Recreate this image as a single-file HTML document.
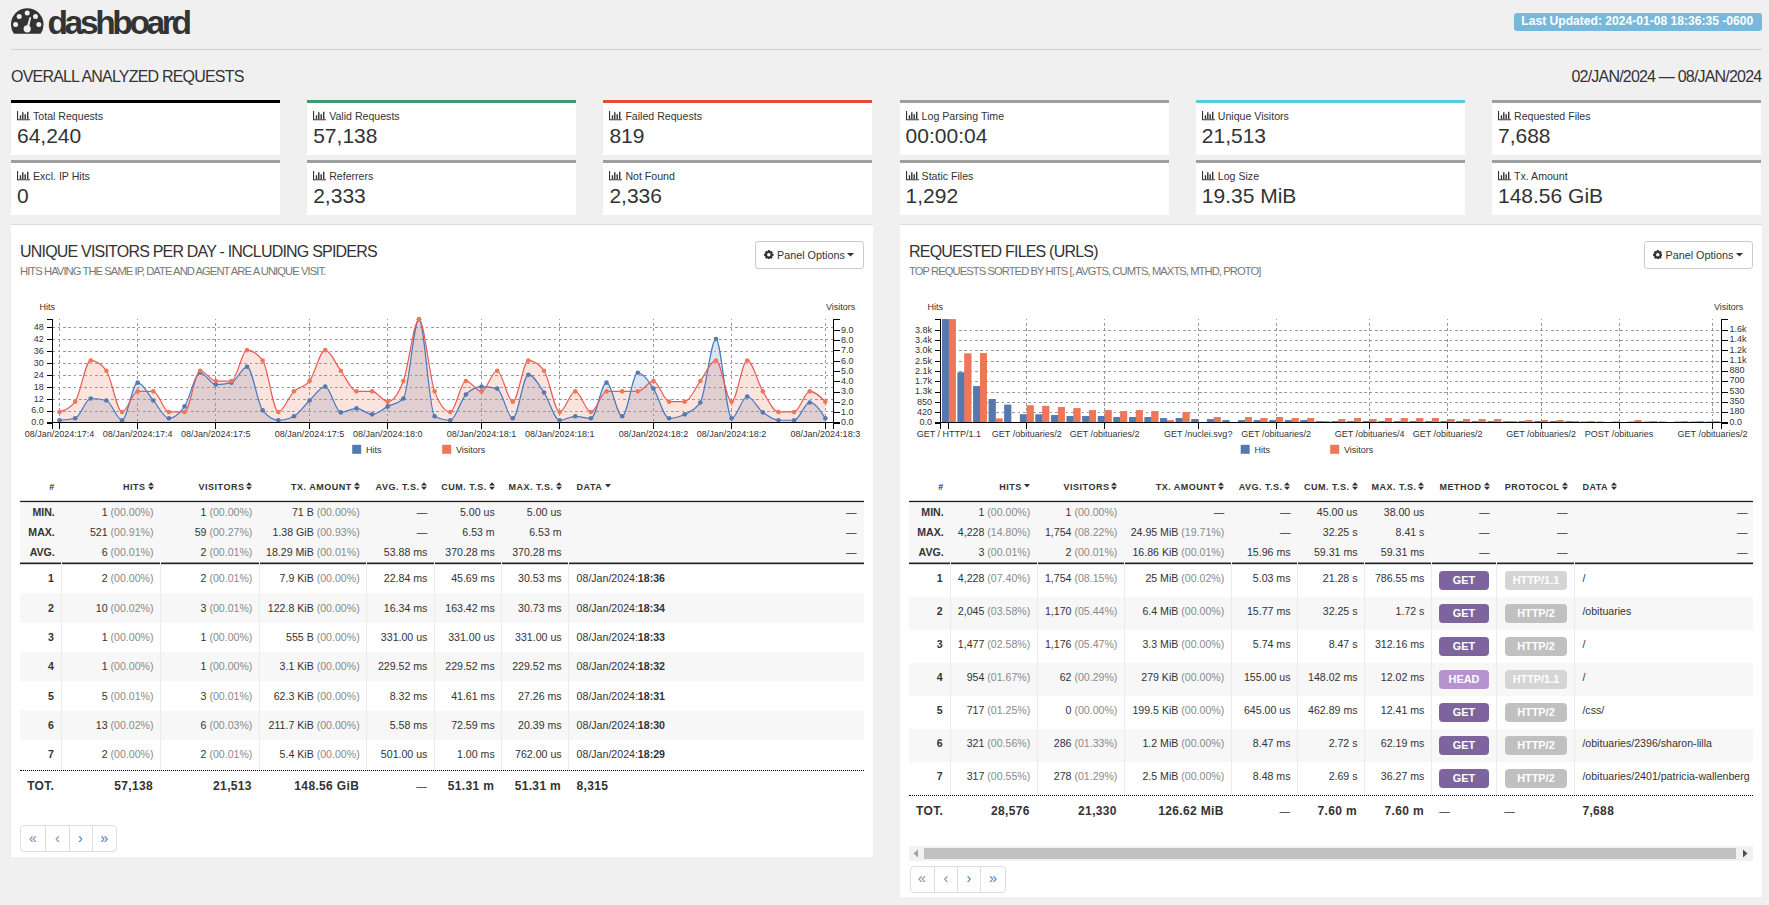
<!DOCTYPE html>
<html><head><meta charset="utf-8"><title>dashboard</title>
<style>
html,body{margin:0;padding:0;}
body{width:1769px;height:905px;overflow:hidden;position:relative;background:#f0f0f0;font-family:"Liberation Sans", sans-serif;color:#333;}
.pc{color:#8a8a8a;}
</style></head><body>

<svg style="position:absolute;left:11px;top:8px" width="33" height="27" viewBox="0 0 33 27">
<path fill="#333" d="M2.92,25.8 A16.25,16.25 0 1 1 29.58,25.8 Z"/>
<circle cx="16.2" cy="4.9" r="2.5" fill="#f0f0f0"/>
<circle cx="8.2" cy="8.6" r="2.5" fill="#f0f0f0"/>
<circle cx="24.5" cy="8.6" r="2.5" fill="#f0f0f0"/>
<circle cx="4.6" cy="16.5" r="2.5" fill="#f0f0f0"/>
<circle cx="27.8" cy="16.5" r="2.5" fill="#f0f0f0"/>
<circle cx="16.2" cy="20.8" r="3.6" fill="#f0f0f0"/>
<path d="M15.3,20.5 L18.6,9.0 L20.2,9.4 L17.6,21.0 Z" fill="#f0f0f0"/>
</svg>
<div style="position:absolute;left:47.5px;top:3px;font-size:33.6px;line-height:40px;color:#333;font-weight:bold;letter-spacing:-3.4px;white-space:nowrap;">dashboard</div>
<div style="position:absolute;left:11px;top:49px;width:1751px;height:1px;background:#d0d0d0;"></div>
<div style="position:absolute;left:1514px;top:13px;width:248px;height:18px;background:#76b9dc;border-radius:3px;"></div>
<div style="position:absolute;left:1521.3px;top:1px;font-size:12.1px;line-height:40px;color:#fff;font-weight:bold;letter-spacing:0px;white-space:nowrap;">Last Updated: 2024-01-08 18:36:35 -0600</div>
<div style="position:absolute;left:11px;top:57px;font-size:16px;line-height:40px;color:#333;font-weight:normal;letter-spacing:-0.8px;white-space:nowrap;">OVERALL ANALYZED REQUESTS</div>
<div style="position:absolute;right:7.599999999999909px;top:57px;font-size:16px;line-height:40px;color:#333;font-weight:normal;letter-spacing:-0.8px;white-space:nowrap;">02/JAN/2024 &mdash; 08/JAN/2024</div>
<div style="position:absolute;left:11.0px;top:100px;width:269px;height:52px;background:#fff;border-top:3px solid #000;"></div>
<svg style="position:absolute;left:17.0px;top:110.8px" width="14" height="10" viewBox="0 0 14 10">
<path fill="#333" d="M0,0 H1.1 V8.2 H13 V9.3 H0 Z M2.8,4.2 H4.2 V8 H2.8 Z M5.1,1.2 H6.5 V8 H5.1 Z M7.5,3.2 H8.9 V8 H7.5 Z M10,0.7 H11.4 V8 H10 Z"/></svg>
<div style="position:absolute;left:33.0px;top:96px;font-size:10.6px;line-height:40px;color:#333;font-weight:normal;letter-spacing:0px;white-space:nowrap;">Total Requests</div>
<div style="position:absolute;left:17.0px;top:116px;font-size:21px;line-height:40px;color:#333;font-weight:normal;letter-spacing:0px;white-space:nowrap;">64,240</div>
<div style="position:absolute;left:307.2px;top:100px;width:269px;height:52px;background:#fff;border-top:3px solid #3d9970;"></div>
<svg style="position:absolute;left:313.2px;top:110.8px" width="14" height="10" viewBox="0 0 14 10">
<path fill="#333" d="M0,0 H1.1 V8.2 H13 V9.3 H0 Z M2.8,4.2 H4.2 V8 H2.8 Z M5.1,1.2 H6.5 V8 H5.1 Z M7.5,3.2 H8.9 V8 H7.5 Z M10,0.7 H11.4 V8 H10 Z"/></svg>
<div style="position:absolute;left:329.2px;top:96px;font-size:10.6px;line-height:40px;color:#333;font-weight:normal;letter-spacing:0px;white-space:nowrap;">Valid Requests</div>
<div style="position:absolute;left:313.2px;top:116px;font-size:21px;line-height:40px;color:#333;font-weight:normal;letter-spacing:0px;white-space:nowrap;">57,138</div>
<div style="position:absolute;left:603.4px;top:100px;width:269px;height:52px;background:#fff;border-top:3px solid #e9473c;"></div>
<svg style="position:absolute;left:609.4px;top:110.8px" width="14" height="10" viewBox="0 0 14 10">
<path fill="#333" d="M0,0 H1.1 V8.2 H13 V9.3 H0 Z M2.8,4.2 H4.2 V8 H2.8 Z M5.1,1.2 H6.5 V8 H5.1 Z M7.5,3.2 H8.9 V8 H7.5 Z M10,0.7 H11.4 V8 H10 Z"/></svg>
<div style="position:absolute;left:625.4px;top:96px;font-size:10.6px;line-height:40px;color:#333;font-weight:normal;letter-spacing:0px;white-space:nowrap;">Failed Requests</div>
<div style="position:absolute;left:609.4px;top:116px;font-size:21px;line-height:40px;color:#333;font-weight:normal;letter-spacing:0px;white-space:nowrap;">819</div>
<div style="position:absolute;left:899.6px;top:100px;width:269px;height:52px;background:#fff;border-top:3px solid #9e9e9e;"></div>
<svg style="position:absolute;left:905.5999999999999px;top:110.8px" width="14" height="10" viewBox="0 0 14 10">
<path fill="#333" d="M0,0 H1.1 V8.2 H13 V9.3 H0 Z M2.8,4.2 H4.2 V8 H2.8 Z M5.1,1.2 H6.5 V8 H5.1 Z M7.5,3.2 H8.9 V8 H7.5 Z M10,0.7 H11.4 V8 H10 Z"/></svg>
<div style="position:absolute;left:921.5999999999999px;top:96px;font-size:10.6px;line-height:40px;color:#333;font-weight:normal;letter-spacing:0px;white-space:nowrap;">Log Parsing Time</div>
<div style="position:absolute;left:905.5999999999999px;top:116px;font-size:21px;line-height:40px;color:#333;font-weight:normal;letter-spacing:0px;white-space:nowrap;">00:00:04</div>
<div style="position:absolute;left:1195.8px;top:100px;width:269px;height:52px;background:#fff;border-top:3px solid #56ccde;"></div>
<svg style="position:absolute;left:1201.8px;top:110.8px" width="14" height="10" viewBox="0 0 14 10">
<path fill="#333" d="M0,0 H1.1 V8.2 H13 V9.3 H0 Z M2.8,4.2 H4.2 V8 H2.8 Z M5.1,1.2 H6.5 V8 H5.1 Z M7.5,3.2 H8.9 V8 H7.5 Z M10,0.7 H11.4 V8 H10 Z"/></svg>
<div style="position:absolute;left:1217.8px;top:96px;font-size:10.6px;line-height:40px;color:#333;font-weight:normal;letter-spacing:0px;white-space:nowrap;">Unique Visitors</div>
<div style="position:absolute;left:1201.8px;top:116px;font-size:21px;line-height:40px;color:#333;font-weight:normal;letter-spacing:0px;white-space:nowrap;">21,513</div>
<div style="position:absolute;left:1492.0px;top:100px;width:269px;height:52px;background:#fff;border-top:3px solid #9e9e9e;"></div>
<svg style="position:absolute;left:1498.0px;top:110.8px" width="14" height="10" viewBox="0 0 14 10">
<path fill="#333" d="M0,0 H1.1 V8.2 H13 V9.3 H0 Z M2.8,4.2 H4.2 V8 H2.8 Z M5.1,1.2 H6.5 V8 H5.1 Z M7.5,3.2 H8.9 V8 H7.5 Z M10,0.7 H11.4 V8 H10 Z"/></svg>
<div style="position:absolute;left:1514.0px;top:96px;font-size:10.6px;line-height:40px;color:#333;font-weight:normal;letter-spacing:0px;white-space:nowrap;">Requested Files</div>
<div style="position:absolute;left:1498.0px;top:116px;font-size:21px;line-height:40px;color:#333;font-weight:normal;letter-spacing:0px;white-space:nowrap;">7,688</div>
<div style="position:absolute;left:11.0px;top:160px;width:269px;height:52px;background:#fff;border-top:3px solid #9e9e9e;"></div>
<svg style="position:absolute;left:17.0px;top:170.8px" width="14" height="10" viewBox="0 0 14 10">
<path fill="#333" d="M0,0 H1.1 V8.2 H13 V9.3 H0 Z M2.8,4.2 H4.2 V8 H2.8 Z M5.1,1.2 H6.5 V8 H5.1 Z M7.5,3.2 H8.9 V8 H7.5 Z M10,0.7 H11.4 V8 H10 Z"/></svg>
<div style="position:absolute;left:33.0px;top:156px;font-size:10.6px;line-height:40px;color:#333;font-weight:normal;letter-spacing:0px;white-space:nowrap;">Excl. IP Hits</div>
<div style="position:absolute;left:17.0px;top:176px;font-size:21px;line-height:40px;color:#333;font-weight:normal;letter-spacing:0px;white-space:nowrap;">0</div>
<div style="position:absolute;left:307.2px;top:160px;width:269px;height:52px;background:#fff;border-top:3px solid #9e9e9e;"></div>
<svg style="position:absolute;left:313.2px;top:170.8px" width="14" height="10" viewBox="0 0 14 10">
<path fill="#333" d="M0,0 H1.1 V8.2 H13 V9.3 H0 Z M2.8,4.2 H4.2 V8 H2.8 Z M5.1,1.2 H6.5 V8 H5.1 Z M7.5,3.2 H8.9 V8 H7.5 Z M10,0.7 H11.4 V8 H10 Z"/></svg>
<div style="position:absolute;left:329.2px;top:156px;font-size:10.6px;line-height:40px;color:#333;font-weight:normal;letter-spacing:0px;white-space:nowrap;">Referrers</div>
<div style="position:absolute;left:313.2px;top:176px;font-size:21px;line-height:40px;color:#333;font-weight:normal;letter-spacing:0px;white-space:nowrap;">2,333</div>
<div style="position:absolute;left:603.4px;top:160px;width:269px;height:52px;background:#fff;border-top:3px solid #9e9e9e;"></div>
<svg style="position:absolute;left:609.4px;top:170.8px" width="14" height="10" viewBox="0 0 14 10">
<path fill="#333" d="M0,0 H1.1 V8.2 H13 V9.3 H0 Z M2.8,4.2 H4.2 V8 H2.8 Z M5.1,1.2 H6.5 V8 H5.1 Z M7.5,3.2 H8.9 V8 H7.5 Z M10,0.7 H11.4 V8 H10 Z"/></svg>
<div style="position:absolute;left:625.4px;top:156px;font-size:10.6px;line-height:40px;color:#333;font-weight:normal;letter-spacing:0px;white-space:nowrap;">Not Found</div>
<div style="position:absolute;left:609.4px;top:176px;font-size:21px;line-height:40px;color:#333;font-weight:normal;letter-spacing:0px;white-space:nowrap;">2,336</div>
<div style="position:absolute;left:899.6px;top:160px;width:269px;height:52px;background:#fff;border-top:3px solid #9e9e9e;"></div>
<svg style="position:absolute;left:905.5999999999999px;top:170.8px" width="14" height="10" viewBox="0 0 14 10">
<path fill="#333" d="M0,0 H1.1 V8.2 H13 V9.3 H0 Z M2.8,4.2 H4.2 V8 H2.8 Z M5.1,1.2 H6.5 V8 H5.1 Z M7.5,3.2 H8.9 V8 H7.5 Z M10,0.7 H11.4 V8 H10 Z"/></svg>
<div style="position:absolute;left:921.5999999999999px;top:156px;font-size:10.6px;line-height:40px;color:#333;font-weight:normal;letter-spacing:0px;white-space:nowrap;">Static Files</div>
<div style="position:absolute;left:905.5999999999999px;top:176px;font-size:21px;line-height:40px;color:#333;font-weight:normal;letter-spacing:0px;white-space:nowrap;">1,292</div>
<div style="position:absolute;left:1195.8px;top:160px;width:269px;height:52px;background:#fff;border-top:3px solid #9e9e9e;"></div>
<svg style="position:absolute;left:1201.8px;top:170.8px" width="14" height="10" viewBox="0 0 14 10">
<path fill="#333" d="M0,0 H1.1 V8.2 H13 V9.3 H0 Z M2.8,4.2 H4.2 V8 H2.8 Z M5.1,1.2 H6.5 V8 H5.1 Z M7.5,3.2 H8.9 V8 H7.5 Z M10,0.7 H11.4 V8 H10 Z"/></svg>
<div style="position:absolute;left:1217.8px;top:156px;font-size:10.6px;line-height:40px;color:#333;font-weight:normal;letter-spacing:0px;white-space:nowrap;">Log Size</div>
<div style="position:absolute;left:1201.8px;top:176px;font-size:21px;line-height:40px;color:#333;font-weight:normal;letter-spacing:0px;white-space:nowrap;">19.35 MiB</div>
<div style="position:absolute;left:1492.0px;top:160px;width:269px;height:52px;background:#fff;border-top:3px solid #9e9e9e;"></div>
<svg style="position:absolute;left:1498.0px;top:170.8px" width="14" height="10" viewBox="0 0 14 10">
<path fill="#333" d="M0,0 H1.1 V8.2 H13 V9.3 H0 Z M2.8,4.2 H4.2 V8 H2.8 Z M5.1,1.2 H6.5 V8 H5.1 Z M7.5,3.2 H8.9 V8 H7.5 Z M10,0.7 H11.4 V8 H10 Z"/></svg>
<div style="position:absolute;left:1514.0px;top:156px;font-size:10.6px;line-height:40px;color:#333;font-weight:normal;letter-spacing:0px;white-space:nowrap;">Tx. Amount</div>
<div style="position:absolute;left:1498.0px;top:176px;font-size:21px;line-height:40px;color:#333;font-weight:normal;letter-spacing:0px;white-space:nowrap;">148.56 GiB</div>
<div style="position:absolute;left:11px;top:224px;width:862px;height:633px;background:#fff;border-top:1px solid #ddd;box-sizing:border-box;"></div>
<div style="position:absolute;left:900px;top:224px;width:862px;height:673px;background:#fff;border-top:1px solid #ddd;box-sizing:border-box;"></div>
<div style="position:absolute;left:20px;top:232px;font-size:16px;line-height:40px;color:#333;font-weight:normal;letter-spacing:-0.8px;white-space:nowrap;">UNIQUE VISITORS PER DAY - INCLUDING SPIDERS</div>
<div style="position:absolute;left:20px;top:251px;font-size:11.2px;line-height:40px;color:#777;font-weight:normal;letter-spacing:-0.92px;white-space:nowrap;">HITS HAVING THE SAME IP, DATE AND AGENT ARE A UNIQUE VISIT.</div>
<div style="position:absolute;left:909px;top:232px;font-size:16px;line-height:40px;color:#333;font-weight:normal;letter-spacing:-0.8px;white-space:nowrap;">REQUESTED FILES (URLS)</div>
<div style="position:absolute;left:909px;top:251px;font-size:11.2px;line-height:40px;color:#777;font-weight:normal;letter-spacing:-0.92px;white-space:nowrap;">TOP REQUESTS SORTED BY HITS [, AVGTS, CUMTS, MAXTS, MTHD, PROTO]</div>
<div style="position:absolute;left:755px;top:241px;width:109px;height:28px;box-sizing:border-box;border:1px solid #ccc;border-radius:3px;background:#fff;"></div>
<svg style="position:absolute;left:764px;top:249.6px" width="9.6" height="9.6" viewBox="0 0 10 10"><path fill="#333" fill-rule="evenodd" d="M4,0 H6 L6.3,1.6 L7.6,0.9 L9.1,2.4 L8.4,3.7 L10,4 V6 L8.4,6.3 L9.1,7.6 L7.6,9.1 L6.3,8.4 L6,10 H4 L3.7,8.4 L2.4,9.1 L0.9,7.6 L1.6,6.3 L0,6 V4 L1.6,3.7 L0.9,2.4 L2.4,0.9 L3.7,1.6 Z M5,3.2 A1.8,1.8 0 1 0 5,6.8 A1.8,1.8 0 1 0 5,3.2 Z"/></svg>
<div style="position:absolute;left:777px;top:235px;font-size:10.8px;line-height:40px;color:#333;font-weight:normal;letter-spacing:0px;white-space:nowrap;">Panel Options</div>
<svg style="position:absolute;left:847px;top:252.6px" width="7" height="4" viewBox="0 0 7 4"><path fill="#333" d="M0,0 H7 L3.5,3.6 Z"/></svg>
<div style="position:absolute;left:1643.5px;top:241px;width:109px;height:28px;box-sizing:border-box;border:1px solid #ccc;border-radius:3px;background:#fff;"></div>
<svg style="position:absolute;left:1652.5px;top:249.6px" width="9.6" height="9.6" viewBox="0 0 10 10"><path fill="#333" fill-rule="evenodd" d="M4,0 H6 L6.3,1.6 L7.6,0.9 L9.1,2.4 L8.4,3.7 L10,4 V6 L8.4,6.3 L9.1,7.6 L7.6,9.1 L6.3,8.4 L6,10 H4 L3.7,8.4 L2.4,9.1 L0.9,7.6 L1.6,6.3 L0,6 V4 L1.6,3.7 L0.9,2.4 L2.4,0.9 L3.7,1.6 Z M5,3.2 A1.8,1.8 0 1 0 5,6.8 A1.8,1.8 0 1 0 5,3.2 Z"/></svg>
<div style="position:absolute;left:1665.5px;top:235px;font-size:10.8px;line-height:40px;color:#333;font-weight:normal;letter-spacing:0px;white-space:nowrap;">Panel Options</div>
<svg style="position:absolute;left:1735.5px;top:252.6px" width="7" height="4" viewBox="0 0 7 4"><path fill="#333" d="M0,0 H7 L3.5,3.6 Z"/></svg>
<svg style="position:absolute;left:0;top:0" width="1769" height="905" viewBox="0 0 1769 905">
<g font-family="Liberation Sans, sans-serif" font-size="9" fill="#333">
<text x="39.5" y="310">Hits</text><text x="826" y="310">Visitors</text>
</g>
<path d="M59.50,420.27 C64.71,419.94 69.92,419.61 75.13,418.29 C80.34,416.97 85.55,398.48 90.76,398.48 C95.97,398.48 101.18,399.14 106.39,400.46 C111.60,401.78 116.81,420.27 122.02,420.27 C127.23,420.27 132.44,382.63 137.65,382.63 C142.86,382.63 148.07,394.52 153.28,400.46 C158.49,406.40 163.70,418.29 168.91,418.29 C174.12,418.29 179.33,414.00 184.54,406.40 C189.75,398.81 194.96,372.73 200.17,372.73 C205.38,372.73 210.59,384.62 215.80,384.62 C221.01,384.62 226.22,383.96 231.43,382.63 C236.64,381.31 241.85,366.79 247.06,366.79 C252.27,366.79 257.48,403.76 262.69,410.37 C267.90,416.97 273.11,420.27 278.32,420.27 C283.53,420.27 288.74,418.95 293.95,416.31 C299.16,413.67 304.37,405.41 309.58,400.46 C314.79,395.51 320.00,386.60 325.21,386.60 C330.42,386.60 335.63,412.35 340.84,412.35 C346.05,412.35 351.26,408.38 356.47,408.38 C361.68,408.38 366.89,414.33 372.10,414.33 C377.31,414.33 382.52,409.04 387.73,406.40 C392.94,403.76 398.15,403.76 403.36,398.48 C408.57,393.20 413.78,319.25 418.99,319.25 C424.20,319.25 429.41,413.67 434.62,416.31 C439.83,418.95 445.04,420.27 450.25,420.27 C455.46,420.27 460.67,399.80 465.88,394.52 C471.09,389.24 476.30,386.60 481.51,386.60 C486.72,386.60 491.93,387.26 497.14,388.58 C502.35,389.90 507.56,418.29 512.77,418.29 C517.98,418.29 523.19,374.71 528.40,374.71 C533.61,374.71 538.82,384.95 544.03,392.54 C549.24,400.13 554.45,420.27 559.66,420.27 C564.87,420.27 570.08,416.31 575.29,416.31 C580.50,416.31 585.71,418.29 590.92,418.29 C596.13,418.29 601.34,382.63 606.55,382.63 C611.76,382.63 616.97,416.31 622.18,416.31 C627.39,416.31 632.60,372.73 637.81,372.73 C643.02,372.73 648.23,380.98 653.44,388.58 C658.65,396.17 663.86,418.29 669.07,418.29 C674.28,418.29 679.49,416.97 684.70,414.33 C689.91,411.69 695.12,410.37 700.33,402.44 C705.54,394.52 710.75,339.06 715.96,339.06 C721.17,339.06 726.38,418.29 731.59,418.29 C736.80,418.29 742.01,396.50 747.22,396.50 C752.43,396.50 757.64,408.38 762.85,412.35 C768.06,416.31 773.27,420.27 778.48,420.27 C783.69,420.27 788.90,420.27 794.11,420.27 C799.32,420.27 804.53,402.44 809.74,402.44 C814.95,402.44 820.16,410.37 825.37,418.29 L825.37,422.25 L59.50,422.25 Z" fill="#5579af" fill-opacity="0.2"/>
<path d="M59.50,411.95 C64.71,410.23 69.92,408.52 75.13,401.65 C80.34,394.78 85.55,360.45 90.76,360.45 C95.97,360.45 101.18,363.88 106.39,370.75 C111.60,377.62 116.81,411.95 122.02,411.95 C127.23,411.95 132.44,391.35 137.65,391.35 C142.86,391.35 148.07,391.35 153.28,391.35 C158.49,391.35 163.70,411.95 168.91,411.95 C174.12,411.95 179.33,411.95 184.54,411.95 C189.75,411.95 194.96,370.75 200.17,370.75 C205.38,370.75 210.59,381.05 215.80,381.05 C221.01,381.05 226.22,381.05 231.43,381.05 C236.64,381.05 241.85,350.15 247.06,350.15 C252.27,350.15 257.48,353.58 262.69,360.45 C267.90,367.32 273.11,411.95 278.32,411.95 C283.53,411.95 288.74,396.50 293.95,391.35 C299.16,386.20 304.37,387.92 309.58,381.05 C314.79,374.18 320.00,350.15 325.21,350.15 C330.42,350.15 335.63,363.88 340.84,370.75 C346.05,377.62 351.26,391.35 356.47,391.35 C361.68,391.35 366.89,391.35 372.10,391.35 C377.31,391.35 382.52,401.65 387.73,401.65 C392.94,401.65 398.15,394.78 403.36,381.05 C408.57,367.32 413.78,319.25 418.99,319.25 C424.20,319.25 429.41,377.62 434.62,391.35 C439.83,405.08 445.04,411.95 450.25,411.95 C455.46,411.95 460.67,381.05 465.88,381.05 C471.09,381.05 476.30,391.35 481.51,391.35 C486.72,391.35 491.93,370.75 497.14,370.75 C502.35,370.75 507.56,401.65 512.77,401.65 C517.98,401.65 523.19,360.45 528.40,360.45 C533.61,360.45 538.82,363.88 544.03,370.75 C549.24,377.62 554.45,411.95 559.66,411.95 C564.87,411.95 570.08,391.35 575.29,391.35 C580.50,391.35 585.71,411.95 590.92,411.95 C596.13,411.95 601.34,391.35 606.55,391.35 C611.76,391.35 616.97,391.35 622.18,391.35 C627.39,391.35 632.60,391.35 637.81,391.35 C643.02,391.35 648.23,381.05 653.44,381.05 C658.65,381.05 663.86,401.65 669.07,401.65 C674.28,401.65 679.49,401.65 684.70,401.65 C689.91,401.65 695.12,387.92 700.33,381.05 C705.54,374.18 710.75,360.45 715.96,360.45 C721.17,360.45 726.38,401.65 731.59,401.65 C736.80,401.65 742.01,360.45 747.22,360.45 C752.43,360.45 757.64,382.77 762.85,391.35 C768.06,399.93 773.27,411.95 778.48,411.95 C783.69,411.95 788.90,411.95 794.11,411.95 C799.32,411.95 804.53,391.35 809.74,391.35 C814.95,391.35 820.16,396.50 825.37,401.65 L825.37,422.25 L59.50,422.25 Z" fill="#ee7759" fill-opacity="0.2"/>
<path d="M833.7,411.12H52.5 M833.7,399.23H52.5 M833.7,387.35H52.5 M833.7,375.46H52.5 M833.7,363.58H52.5 M833.7,351.69H52.5 M833.7,339.81H52.5 M833.7,327.92H52.5 M59.50,421.6V319 M137.65,421.6V319 M215.80,421.6V319 M309.58,421.6V319 M387.73,421.6V319 M481.51,421.6V319 M559.66,421.6V319 M653.44,421.6V319 M731.59,421.6V319 M825.37,421.6V319" stroke="#999" stroke-width="1" stroke-dasharray="2.667,2.667" fill="none" shape-rendering="crispEdges"/>
<path d="M59.50,420.27 C64.71,419.94 69.92,419.61 75.13,418.29 C80.34,416.97 85.55,398.48 90.76,398.48 C95.97,398.48 101.18,399.14 106.39,400.46 C111.60,401.78 116.81,420.27 122.02,420.27 C127.23,420.27 132.44,382.63 137.65,382.63 C142.86,382.63 148.07,394.52 153.28,400.46 C158.49,406.40 163.70,418.29 168.91,418.29 C174.12,418.29 179.33,414.00 184.54,406.40 C189.75,398.81 194.96,372.73 200.17,372.73 C205.38,372.73 210.59,384.62 215.80,384.62 C221.01,384.62 226.22,383.96 231.43,382.63 C236.64,381.31 241.85,366.79 247.06,366.79 C252.27,366.79 257.48,403.76 262.69,410.37 C267.90,416.97 273.11,420.27 278.32,420.27 C283.53,420.27 288.74,418.95 293.95,416.31 C299.16,413.67 304.37,405.41 309.58,400.46 C314.79,395.51 320.00,386.60 325.21,386.60 C330.42,386.60 335.63,412.35 340.84,412.35 C346.05,412.35 351.26,408.38 356.47,408.38 C361.68,408.38 366.89,414.33 372.10,414.33 C377.31,414.33 382.52,409.04 387.73,406.40 C392.94,403.76 398.15,403.76 403.36,398.48 C408.57,393.20 413.78,319.25 418.99,319.25 C424.20,319.25 429.41,413.67 434.62,416.31 C439.83,418.95 445.04,420.27 450.25,420.27 C455.46,420.27 460.67,399.80 465.88,394.52 C471.09,389.24 476.30,386.60 481.51,386.60 C486.72,386.60 491.93,387.26 497.14,388.58 C502.35,389.90 507.56,418.29 512.77,418.29 C517.98,418.29 523.19,374.71 528.40,374.71 C533.61,374.71 538.82,384.95 544.03,392.54 C549.24,400.13 554.45,420.27 559.66,420.27 C564.87,420.27 570.08,416.31 575.29,416.31 C580.50,416.31 585.71,418.29 590.92,418.29 C596.13,418.29 601.34,382.63 606.55,382.63 C611.76,382.63 616.97,416.31 622.18,416.31 C627.39,416.31 632.60,372.73 637.81,372.73 C643.02,372.73 648.23,380.98 653.44,388.58 C658.65,396.17 663.86,418.29 669.07,418.29 C674.28,418.29 679.49,416.97 684.70,414.33 C689.91,411.69 695.12,410.37 700.33,402.44 C705.54,394.52 710.75,339.06 715.96,339.06 C721.17,339.06 726.38,418.29 731.59,418.29 C736.80,418.29 742.01,396.50 747.22,396.50 C752.43,396.50 757.64,408.38 762.85,412.35 C768.06,416.31 773.27,420.27 778.48,420.27 C783.69,420.27 788.90,420.27 794.11,420.27 C799.32,420.27 804.53,402.44 809.74,402.44 C814.95,402.44 820.16,410.37 825.37,418.29" stroke="#4279c2" stroke-width="1.2" fill="none"/>
<path d="M59.50,411.95 C64.71,410.23 69.92,408.52 75.13,401.65 C80.34,394.78 85.55,360.45 90.76,360.45 C95.97,360.45 101.18,363.88 106.39,370.75 C111.60,377.62 116.81,411.95 122.02,411.95 C127.23,411.95 132.44,391.35 137.65,391.35 C142.86,391.35 148.07,391.35 153.28,391.35 C158.49,391.35 163.70,411.95 168.91,411.95 C174.12,411.95 179.33,411.95 184.54,411.95 C189.75,411.95 194.96,370.75 200.17,370.75 C205.38,370.75 210.59,381.05 215.80,381.05 C221.01,381.05 226.22,381.05 231.43,381.05 C236.64,381.05 241.85,350.15 247.06,350.15 C252.27,350.15 257.48,353.58 262.69,360.45 C267.90,367.32 273.11,411.95 278.32,411.95 C283.53,411.95 288.74,396.50 293.95,391.35 C299.16,386.20 304.37,387.92 309.58,381.05 C314.79,374.18 320.00,350.15 325.21,350.15 C330.42,350.15 335.63,363.88 340.84,370.75 C346.05,377.62 351.26,391.35 356.47,391.35 C361.68,391.35 366.89,391.35 372.10,391.35 C377.31,391.35 382.52,401.65 387.73,401.65 C392.94,401.65 398.15,394.78 403.36,381.05 C408.57,367.32 413.78,319.25 418.99,319.25 C424.20,319.25 429.41,377.62 434.62,391.35 C439.83,405.08 445.04,411.95 450.25,411.95 C455.46,411.95 460.67,381.05 465.88,381.05 C471.09,381.05 476.30,391.35 481.51,391.35 C486.72,391.35 491.93,370.75 497.14,370.75 C502.35,370.75 507.56,401.65 512.77,401.65 C517.98,401.65 523.19,360.45 528.40,360.45 C533.61,360.45 538.82,363.88 544.03,370.75 C549.24,377.62 554.45,411.95 559.66,411.95 C564.87,411.95 570.08,391.35 575.29,391.35 C580.50,391.35 585.71,411.95 590.92,411.95 C596.13,411.95 601.34,391.35 606.55,391.35 C611.76,391.35 616.97,391.35 622.18,391.35 C627.39,391.35 632.60,391.35 637.81,391.35 C643.02,391.35 648.23,381.05 653.44,381.05 C658.65,381.05 663.86,401.65 669.07,401.65 C674.28,401.65 679.49,401.65 684.70,401.65 C689.91,401.65 695.12,387.92 700.33,381.05 C705.54,374.18 710.75,360.45 715.96,360.45 C721.17,360.45 726.38,401.65 731.59,401.65 C736.80,401.65 742.01,360.45 747.22,360.45 C752.43,360.45 757.64,382.77 762.85,391.35 C768.06,399.93 773.27,411.95 778.48,411.95 C783.69,411.95 788.90,411.95 794.11,411.95 C799.32,411.95 804.53,391.35 809.74,391.35 C814.95,391.35 820.16,396.50 825.37,401.65" stroke="#ea5856" stroke-width="1.2" fill="none"/>
<circle cx="59.50" cy="420.27" r="2.3" fill="#5579af"/>
<circle cx="75.13" cy="418.29" r="2.3" fill="#5579af"/>
<circle cx="90.76" cy="398.48" r="2.3" fill="#5579af"/>
<circle cx="106.39" cy="400.46" r="2.3" fill="#5579af"/>
<circle cx="122.02" cy="420.27" r="2.3" fill="#5579af"/>
<circle cx="137.65" cy="382.63" r="2.3" fill="#5579af"/>
<circle cx="153.28" cy="400.46" r="2.3" fill="#5579af"/>
<circle cx="168.91" cy="418.29" r="2.3" fill="#5579af"/>
<circle cx="184.54" cy="406.40" r="2.3" fill="#5579af"/>
<circle cx="200.17" cy="372.73" r="2.3" fill="#5579af"/>
<circle cx="215.80" cy="384.62" r="2.3" fill="#5579af"/>
<circle cx="231.43" cy="382.63" r="2.3" fill="#5579af"/>
<circle cx="247.06" cy="366.79" r="2.3" fill="#5579af"/>
<circle cx="262.69" cy="410.37" r="2.3" fill="#5579af"/>
<circle cx="278.32" cy="420.27" r="2.3" fill="#5579af"/>
<circle cx="293.95" cy="416.31" r="2.3" fill="#5579af"/>
<circle cx="309.58" cy="400.46" r="2.3" fill="#5579af"/>
<circle cx="325.21" cy="386.60" r="2.3" fill="#5579af"/>
<circle cx="340.84" cy="412.35" r="2.3" fill="#5579af"/>
<circle cx="356.47" cy="408.38" r="2.3" fill="#5579af"/>
<circle cx="372.10" cy="414.33" r="2.3" fill="#5579af"/>
<circle cx="387.73" cy="406.40" r="2.3" fill="#5579af"/>
<circle cx="403.36" cy="398.48" r="2.3" fill="#5579af"/>
<circle cx="418.99" cy="319.25" r="2.3" fill="#5579af"/>
<circle cx="434.62" cy="416.31" r="2.3" fill="#5579af"/>
<circle cx="450.25" cy="420.27" r="2.3" fill="#5579af"/>
<circle cx="465.88" cy="394.52" r="2.3" fill="#5579af"/>
<circle cx="481.51" cy="386.60" r="2.3" fill="#5579af"/>
<circle cx="497.14" cy="388.58" r="2.3" fill="#5579af"/>
<circle cx="512.77" cy="418.29" r="2.3" fill="#5579af"/>
<circle cx="528.40" cy="374.71" r="2.3" fill="#5579af"/>
<circle cx="544.03" cy="392.54" r="2.3" fill="#5579af"/>
<circle cx="559.66" cy="420.27" r="2.3" fill="#5579af"/>
<circle cx="575.29" cy="416.31" r="2.3" fill="#5579af"/>
<circle cx="590.92" cy="418.29" r="2.3" fill="#5579af"/>
<circle cx="606.55" cy="382.63" r="2.3" fill="#5579af"/>
<circle cx="622.18" cy="416.31" r="2.3" fill="#5579af"/>
<circle cx="637.81" cy="372.73" r="2.3" fill="#5579af"/>
<circle cx="653.44" cy="388.58" r="2.3" fill="#5579af"/>
<circle cx="669.07" cy="418.29" r="2.3" fill="#5579af"/>
<circle cx="684.70" cy="414.33" r="2.3" fill="#5579af"/>
<circle cx="700.33" cy="402.44" r="2.3" fill="#5579af"/>
<circle cx="715.96" cy="339.06" r="2.3" fill="#5579af"/>
<circle cx="731.59" cy="418.29" r="2.3" fill="#5579af"/>
<circle cx="747.22" cy="396.50" r="2.3" fill="#5579af"/>
<circle cx="762.85" cy="412.35" r="2.3" fill="#5579af"/>
<circle cx="778.48" cy="420.27" r="2.3" fill="#5579af"/>
<circle cx="794.11" cy="420.27" r="2.3" fill="#5579af"/>
<circle cx="809.74" cy="402.44" r="2.3" fill="#5579af"/>
<circle cx="825.37" cy="418.29" r="2.3" fill="#5579af"/>
<circle cx="59.50" cy="411.95" r="2.3" fill="#ee7759"/>
<circle cx="75.13" cy="401.65" r="2.3" fill="#ee7759"/>
<circle cx="90.76" cy="360.45" r="2.3" fill="#ee7759"/>
<circle cx="106.39" cy="370.75" r="2.3" fill="#ee7759"/>
<circle cx="122.02" cy="411.95" r="2.3" fill="#ee7759"/>
<circle cx="137.65" cy="391.35" r="2.3" fill="#ee7759"/>
<circle cx="153.28" cy="391.35" r="2.3" fill="#ee7759"/>
<circle cx="168.91" cy="411.95" r="2.3" fill="#ee7759"/>
<circle cx="184.54" cy="411.95" r="2.3" fill="#ee7759"/>
<circle cx="200.17" cy="370.75" r="2.3" fill="#ee7759"/>
<circle cx="215.80" cy="381.05" r="2.3" fill="#ee7759"/>
<circle cx="231.43" cy="381.05" r="2.3" fill="#ee7759"/>
<circle cx="247.06" cy="350.15" r="2.3" fill="#ee7759"/>
<circle cx="262.69" cy="360.45" r="2.3" fill="#ee7759"/>
<circle cx="278.32" cy="411.95" r="2.3" fill="#ee7759"/>
<circle cx="293.95" cy="391.35" r="2.3" fill="#ee7759"/>
<circle cx="309.58" cy="381.05" r="2.3" fill="#ee7759"/>
<circle cx="325.21" cy="350.15" r="2.3" fill="#ee7759"/>
<circle cx="340.84" cy="370.75" r="2.3" fill="#ee7759"/>
<circle cx="356.47" cy="391.35" r="2.3" fill="#ee7759"/>
<circle cx="372.10" cy="391.35" r="2.3" fill="#ee7759"/>
<circle cx="387.73" cy="401.65" r="2.3" fill="#ee7759"/>
<circle cx="403.36" cy="381.05" r="2.3" fill="#ee7759"/>
<circle cx="418.99" cy="319.25" r="2.3" fill="#ee7759"/>
<circle cx="434.62" cy="391.35" r="2.3" fill="#ee7759"/>
<circle cx="450.25" cy="411.95" r="2.3" fill="#ee7759"/>
<circle cx="465.88" cy="381.05" r="2.3" fill="#ee7759"/>
<circle cx="481.51" cy="391.35" r="2.3" fill="#ee7759"/>
<circle cx="497.14" cy="370.75" r="2.3" fill="#ee7759"/>
<circle cx="512.77" cy="401.65" r="2.3" fill="#ee7759"/>
<circle cx="528.40" cy="360.45" r="2.3" fill="#ee7759"/>
<circle cx="544.03" cy="370.75" r="2.3" fill="#ee7759"/>
<circle cx="559.66" cy="411.95" r="2.3" fill="#ee7759"/>
<circle cx="575.29" cy="391.35" r="2.3" fill="#ee7759"/>
<circle cx="590.92" cy="411.95" r="2.3" fill="#ee7759"/>
<circle cx="606.55" cy="391.35" r="2.3" fill="#ee7759"/>
<circle cx="622.18" cy="391.35" r="2.3" fill="#ee7759"/>
<circle cx="637.81" cy="391.35" r="2.3" fill="#ee7759"/>
<circle cx="653.44" cy="381.05" r="2.3" fill="#ee7759"/>
<circle cx="669.07" cy="401.65" r="2.3" fill="#ee7759"/>
<circle cx="684.70" cy="401.65" r="2.3" fill="#ee7759"/>
<circle cx="700.33" cy="381.05" r="2.3" fill="#ee7759"/>
<circle cx="715.96" cy="360.45" r="2.3" fill="#ee7759"/>
<circle cx="731.59" cy="401.65" r="2.3" fill="#ee7759"/>
<circle cx="747.22" cy="360.45" r="2.3" fill="#ee7759"/>
<circle cx="762.85" cy="391.35" r="2.3" fill="#ee7759"/>
<circle cx="778.48" cy="411.95" r="2.3" fill="#ee7759"/>
<circle cx="794.11" cy="411.95" r="2.3" fill="#ee7759"/>
<circle cx="809.74" cy="391.35" r="2.3" fill="#ee7759"/>
<circle cx="825.37" cy="401.65" r="2.3" fill="#ee7759"/>
<path d="M46.5,319.5H52.5V422.5H46.5 M839.5,319.5H833.5V422.5H839.5 M52.5,422.5H833.5 M52.5,422.5V428.5M833.5,422.5V428.5 M46.5,423.00H52.5 M46.5,411.12H52.5 M46.5,399.23H52.5 M46.5,387.35H52.5 M46.5,375.46H52.5 M46.5,363.58H52.5 M46.5,351.69H52.5 M46.5,339.81H52.5 M46.5,327.92H52.5 M833.5,423.00H839.5 M833.5,412.70H839.5 M833.5,402.40H839.5 M833.5,392.10H839.5 M833.5,381.80H839.5 M833.5,371.50H839.5 M833.5,361.20H839.5 M833.5,350.90H839.5 M833.5,340.60H839.5 M833.5,330.30H839.5 M59.50,422.5V428.5 M137.65,422.5V428.5 M215.80,422.5V428.5 M309.58,422.5V428.5 M387.73,422.5V428.5 M481.51,422.5V428.5 M559.66,422.5V428.5 M653.44,422.5V428.5 M731.59,422.5V428.5 M825.37,422.5V428.5" stroke="#000" stroke-width="1" fill="none" shape-rendering="crispEdges"/>
<g font-family="Liberation Sans, sans-serif" font-size="9" fill="#333">
<text x="43.8" y="425.35" text-anchor="end">0.0</text>
<text x="43.8" y="413.47" text-anchor="end">6.0</text>
<text x="43.8" y="401.58" text-anchor="end">12</text>
<text x="43.8" y="389.70" text-anchor="end">18</text>
<text x="43.8" y="377.81" text-anchor="end">24</text>
<text x="43.8" y="365.93" text-anchor="end">30</text>
<text x="43.8" y="354.04" text-anchor="end">36</text>
<text x="43.8" y="342.16" text-anchor="end">42</text>
<text x="43.8" y="330.27" text-anchor="end">48</text>
<text x="841" y="425.35">0.0</text>
<text x="841" y="415.05">1.0</text>
<text x="841" y="404.75">2.0</text>
<text x="841" y="394.45">3.0</text>
<text x="841" y="384.15">4.0</text>
<text x="841" y="373.85">5.0</text>
<text x="841" y="363.55">6.0</text>
<text x="841" y="353.25">7.0</text>
<text x="841" y="342.95">8.0</text>
<text x="841" y="332.65">9.0</text>
<text x="59.50" y="437" text-anchor="middle">08/Jan/2024:17:4</text>
<text x="137.65" y="437" text-anchor="middle">08/Jan/2024:17:4</text>
<text x="215.80" y="437" text-anchor="middle">08/Jan/2024:17:5</text>
<text x="309.58" y="437" text-anchor="middle">08/Jan/2024:17:5</text>
<text x="387.73" y="437" text-anchor="middle">08/Jan/2024:18:0</text>
<text x="481.51" y="437" text-anchor="middle">08/Jan/2024:18:1</text>
<text x="559.66" y="437" text-anchor="middle">08/Jan/2024:18:1</text>
<text x="653.44" y="437" text-anchor="middle">08/Jan/2024:18:2</text>
<text x="731.59" y="437" text-anchor="middle">08/Jan/2024:18:2</text>
<text x="825.37" y="437" text-anchor="middle">08/Jan/2024:18:3</text>
<rect x="352.2" y="444.8" width="9" height="9" fill="#5579af"/><text x="366" y="452.6">Hits</text>
<rect x="442.2" y="444.8" width="9" height="9" fill="#ee7759"/><text x="456" y="452.6">Visitors</text>
</g>
<g font-family="Liberation Sans, sans-serif" font-size="9" fill="#333">
<text x="927.5" y="310">Hits</text><text x="1714" y="310">Visitors</text>
</g>
<rect x="942.00" y="319.25" width="6.85" height="103.00" fill="#5579af"/>
<rect x="948.85" y="319.25" width="6.85" height="103.00" fill="#ee7759"/>
<rect x="957.59" y="372.43" width="6.85" height="49.82" fill="#5579af"/>
<rect x="964.44" y="353.54" width="6.85" height="68.71" fill="#ee7759"/>
<rect x="973.17" y="386.27" width="6.85" height="35.98" fill="#5579af"/>
<rect x="980.02" y="353.19" width="6.85" height="69.06" fill="#ee7759"/>
<rect x="988.75" y="399.01" width="6.85" height="23.24" fill="#5579af"/>
<rect x="995.61" y="418.61" width="6.85" height="3.64" fill="#ee7759"/>
<rect x="1004.34" y="404.78" width="6.85" height="17.47" fill="#5579af"/>
<rect x="1019.92" y="414.43" width="6.85" height="7.82" fill="#5579af"/>
<rect x="1026.77" y="405.46" width="6.85" height="16.79" fill="#ee7759"/>
<rect x="1035.51" y="414.53" width="6.85" height="7.72" fill="#5579af"/>
<rect x="1042.36" y="405.93" width="6.85" height="16.32" fill="#ee7759"/>
<rect x="1051.10" y="415.15" width="6.85" height="7.10" fill="#5579af"/>
<rect x="1057.94" y="407.15" width="6.85" height="15.10" fill="#ee7759"/>
<rect x="1066.68" y="416.15" width="6.85" height="6.10" fill="#5579af"/>
<rect x="1073.53" y="408.25" width="6.85" height="14.00" fill="#ee7759"/>
<rect x="1082.27" y="416.15" width="6.85" height="6.10" fill="#5579af"/>
<rect x="1089.12" y="410.25" width="6.85" height="12.00" fill="#ee7759"/>
<rect x="1097.85" y="416.15" width="6.85" height="6.10" fill="#5579af"/>
<rect x="1104.70" y="410.25" width="6.85" height="12.00" fill="#ee7759"/>
<rect x="1113.43" y="417.15" width="6.85" height="5.10" fill="#5579af"/>
<rect x="1120.28" y="411.25" width="6.85" height="11.00" fill="#ee7759"/>
<rect x="1129.02" y="417.15" width="6.85" height="5.10" fill="#5579af"/>
<rect x="1135.87" y="410.25" width="6.85" height="12.00" fill="#ee7759"/>
<rect x="1144.61" y="417.15" width="6.85" height="5.10" fill="#5579af"/>
<rect x="1151.45" y="411.25" width="6.85" height="11.00" fill="#ee7759"/>
<rect x="1160.19" y="418.15" width="6.85" height="4.10" fill="#5579af"/>
<rect x="1167.04" y="420.25" width="6.85" height="2.00" fill="#ee7759"/>
<rect x="1175.78" y="418.15" width="6.85" height="4.10" fill="#5579af"/>
<rect x="1182.62" y="412.25" width="6.85" height="10.00" fill="#ee7759"/>
<rect x="1191.36" y="419.20" width="6.85" height="3.05" fill="#5579af"/>
<rect x="1206.94" y="419.25" width="6.85" height="3.00" fill="#5579af"/>
<rect x="1213.79" y="417.15" width="6.85" height="5.10" fill="#ee7759"/>
<rect x="1222.53" y="420.25" width="6.85" height="2.00" fill="#5579af"/>
<rect x="1238.12" y="420.25" width="6.85" height="2.00" fill="#5579af"/>
<rect x="1244.96" y="417.15" width="6.85" height="5.10" fill="#ee7759"/>
<rect x="1253.70" y="420.25" width="6.85" height="2.00" fill="#5579af"/>
<rect x="1260.55" y="418.15" width="6.85" height="4.10" fill="#ee7759"/>
<rect x="1269.29" y="420.25" width="6.85" height="2.00" fill="#5579af"/>
<rect x="1276.13" y="417.15" width="6.85" height="5.10" fill="#ee7759"/>
<rect x="1284.87" y="420.25" width="6.85" height="2.00" fill="#5579af"/>
<rect x="1291.72" y="418.15" width="6.85" height="4.10" fill="#ee7759"/>
<rect x="1300.45" y="420.25" width="6.85" height="2.00" fill="#5579af"/>
<rect x="1307.30" y="418.15" width="6.85" height="4.10" fill="#ee7759"/>
<rect x="1316.04" y="421.25" width="6.85" height="1.00" fill="#5579af"/>
<rect x="1322.89" y="421.25" width="6.85" height="1.00" fill="#ee7759"/>
<rect x="1331.62" y="421.25" width="6.85" height="1.00" fill="#5579af"/>
<rect x="1338.47" y="419.25" width="6.85" height="3.00" fill="#ee7759"/>
<rect x="1347.21" y="421.25" width="6.85" height="1.00" fill="#5579af"/>
<rect x="1354.06" y="418.15" width="6.85" height="4.10" fill="#ee7759"/>
<rect x="1362.80" y="421.25" width="6.85" height="1.00" fill="#5579af"/>
<rect x="1369.64" y="419.25" width="6.85" height="3.00" fill="#ee7759"/>
<rect x="1378.38" y="421.25" width="6.85" height="1.00" fill="#5579af"/>
<rect x="1385.23" y="418.15" width="6.85" height="4.10" fill="#ee7759"/>
<rect x="1393.97" y="421.25" width="6.85" height="1.00" fill="#5579af"/>
<rect x="1400.82" y="418.15" width="6.85" height="4.10" fill="#ee7759"/>
<rect x="1409.55" y="421.25" width="6.85" height="1.00" fill="#5579af"/>
<rect x="1416.40" y="418.15" width="6.85" height="4.10" fill="#ee7759"/>
<rect x="1425.13" y="421.25" width="6.85" height="1.00" fill="#5579af"/>
<rect x="1431.98" y="418.15" width="6.85" height="4.10" fill="#ee7759"/>
<rect x="1440.72" y="421.25" width="6.85" height="1.00" fill="#5579af"/>
<rect x="1447.57" y="419.25" width="6.85" height="3.00" fill="#ee7759"/>
<rect x="1456.31" y="421.25" width="6.85" height="1.00" fill="#5579af"/>
<rect x="1463.15" y="419.25" width="6.85" height="3.00" fill="#ee7759"/>
<rect x="1471.89" y="421.25" width="6.85" height="1.00" fill="#5579af"/>
<rect x="1478.74" y="419.25" width="6.85" height="3.00" fill="#ee7759"/>
<rect x="1487.47" y="421.25" width="6.85" height="1.00" fill="#5579af"/>
<rect x="1494.32" y="419.25" width="6.85" height="3.00" fill="#ee7759"/>
<rect x="1503.06" y="421.45" width="6.85" height="0.80" fill="#5579af"/>
<rect x="1509.91" y="421.25" width="6.85" height="1.00" fill="#ee7759"/>
<rect x="1518.64" y="421.25" width="6.85" height="1.00" fill="#5579af"/>
<rect x="1525.49" y="420.25" width="6.85" height="2.00" fill="#ee7759"/>
<rect x="1534.23" y="421.25" width="6.85" height="1.00" fill="#5579af"/>
<rect x="1541.08" y="420.25" width="6.85" height="2.00" fill="#ee7759"/>
<rect x="1549.82" y="421.25" width="6.85" height="1.00" fill="#5579af"/>
<rect x="1556.66" y="420.25" width="6.85" height="2.00" fill="#ee7759"/>
<rect x="1565.40" y="421.25" width="6.85" height="1.00" fill="#5579af"/>
<rect x="1572.25" y="421.25" width="6.85" height="1.00" fill="#ee7759"/>
<rect x="1580.99" y="421.75" width="6.85" height="0.50" fill="#5579af"/>
<rect x="1587.84" y="421.25" width="6.85" height="1.00" fill="#ee7759"/>
<rect x="1596.57" y="421.75" width="6.85" height="0.50" fill="#5579af"/>
<rect x="1612.16" y="421.75" width="6.85" height="0.50" fill="#5579af"/>
<rect x="1627.74" y="421.75" width="6.85" height="0.50" fill="#5579af"/>
<rect x="1634.59" y="420.25" width="6.85" height="2.00" fill="#ee7759"/>
<rect x="1643.33" y="421.75" width="6.85" height="0.50" fill="#5579af"/>
<rect x="1650.17" y="421.25" width="6.85" height="1.00" fill="#ee7759"/>
<rect x="1658.91" y="421.75" width="6.85" height="0.50" fill="#5579af"/>
<rect x="1674.49" y="421.75" width="6.85" height="0.50" fill="#5579af"/>
<rect x="1681.34" y="421.25" width="6.85" height="1.00" fill="#ee7759"/>
<rect x="1690.08" y="421.75" width="6.85" height="0.50" fill="#5579af"/>
<rect x="1696.93" y="421.25" width="6.85" height="1.00" fill="#ee7759"/>
<rect x="1705.66" y="421.75" width="6.85" height="0.50" fill="#5579af"/>
<rect x="1712.51" y="421.25" width="6.85" height="1.00" fill="#ee7759"/>
<path d="M1724.27,412.70H940.5 M1724.27,402.40H940.5 M1724.27,392.10H940.5 M1724.27,381.80H940.5 M1724.27,371.50H940.5 M1724.27,361.20H940.5 M1724.27,350.90H940.5 M1724.27,340.60H940.5 M1724.27,330.30H940.5 M948.85,421.6V319 M1026.77,421.6V319 M1104.70,421.6V319 M1198.21,421.6V319 M1276.13,421.6V319 M1369.64,421.6V319 M1447.57,421.6V319 M1541.08,421.6V319 M1619.01,421.6V319 M1712.51,421.6V319" stroke="#999" stroke-width="1" stroke-dasharray="2.667,2.667" fill="none" shape-rendering="crispEdges"/>
<rect x="942.00" y="319.25" width="6.85" height="103.00" fill="#5579af"/>
<rect x="948.85" y="319.25" width="6.85" height="103.00" fill="#ee7759"/>
<rect x="957.59" y="372.43" width="6.85" height="49.82" fill="#5579af"/>
<rect x="964.44" y="353.54" width="6.85" height="68.71" fill="#ee7759"/>
<rect x="973.17" y="386.27" width="6.85" height="35.98" fill="#5579af"/>
<rect x="980.02" y="353.19" width="6.85" height="69.06" fill="#ee7759"/>
<rect x="988.75" y="399.01" width="6.85" height="23.24" fill="#5579af"/>
<rect x="995.61" y="418.61" width="6.85" height="3.64" fill="#ee7759"/>
<rect x="1004.34" y="404.78" width="6.85" height="17.47" fill="#5579af"/>
<rect x="1019.92" y="414.43" width="6.85" height="7.82" fill="#5579af"/>
<rect x="1026.77" y="405.46" width="6.85" height="16.79" fill="#ee7759"/>
<rect x="1035.51" y="414.53" width="6.85" height="7.72" fill="#5579af"/>
<rect x="1042.36" y="405.93" width="6.85" height="16.32" fill="#ee7759"/>
<rect x="1051.10" y="415.15" width="6.85" height="7.10" fill="#5579af"/>
<rect x="1057.94" y="407.15" width="6.85" height="15.10" fill="#ee7759"/>
<rect x="1066.68" y="416.15" width="6.85" height="6.10" fill="#5579af"/>
<rect x="1073.53" y="408.25" width="6.85" height="14.00" fill="#ee7759"/>
<rect x="1082.27" y="416.15" width="6.85" height="6.10" fill="#5579af"/>
<rect x="1089.12" y="410.25" width="6.85" height="12.00" fill="#ee7759"/>
<rect x="1097.85" y="416.15" width="6.85" height="6.10" fill="#5579af"/>
<rect x="1104.70" y="410.25" width="6.85" height="12.00" fill="#ee7759"/>
<rect x="1113.43" y="417.15" width="6.85" height="5.10" fill="#5579af"/>
<rect x="1120.28" y="411.25" width="6.85" height="11.00" fill="#ee7759"/>
<rect x="1129.02" y="417.15" width="6.85" height="5.10" fill="#5579af"/>
<rect x="1135.87" y="410.25" width="6.85" height="12.00" fill="#ee7759"/>
<rect x="1144.61" y="417.15" width="6.85" height="5.10" fill="#5579af"/>
<rect x="1151.45" y="411.25" width="6.85" height="11.00" fill="#ee7759"/>
<rect x="1160.19" y="418.15" width="6.85" height="4.10" fill="#5579af"/>
<rect x="1167.04" y="420.25" width="6.85" height="2.00" fill="#ee7759"/>
<rect x="1175.78" y="418.15" width="6.85" height="4.10" fill="#5579af"/>
<rect x="1182.62" y="412.25" width="6.85" height="10.00" fill="#ee7759"/>
<rect x="1191.36" y="419.20" width="6.85" height="3.05" fill="#5579af"/>
<rect x="1206.94" y="419.25" width="6.85" height="3.00" fill="#5579af"/>
<rect x="1213.79" y="417.15" width="6.85" height="5.10" fill="#ee7759"/>
<rect x="1222.53" y="420.25" width="6.85" height="2.00" fill="#5579af"/>
<rect x="1238.12" y="420.25" width="6.85" height="2.00" fill="#5579af"/>
<rect x="1244.96" y="417.15" width="6.85" height="5.10" fill="#ee7759"/>
<rect x="1253.70" y="420.25" width="6.85" height="2.00" fill="#5579af"/>
<rect x="1260.55" y="418.15" width="6.85" height="4.10" fill="#ee7759"/>
<rect x="1269.29" y="420.25" width="6.85" height="2.00" fill="#5579af"/>
<rect x="1276.13" y="417.15" width="6.85" height="5.10" fill="#ee7759"/>
<rect x="1284.87" y="420.25" width="6.85" height="2.00" fill="#5579af"/>
<rect x="1291.72" y="418.15" width="6.85" height="4.10" fill="#ee7759"/>
<rect x="1300.45" y="420.25" width="6.85" height="2.00" fill="#5579af"/>
<rect x="1307.30" y="418.15" width="6.85" height="4.10" fill="#ee7759"/>
<rect x="1316.04" y="421.25" width="6.85" height="1.00" fill="#5579af"/>
<rect x="1322.89" y="421.25" width="6.85" height="1.00" fill="#ee7759"/>
<rect x="1331.62" y="421.25" width="6.85" height="1.00" fill="#5579af"/>
<rect x="1338.47" y="419.25" width="6.85" height="3.00" fill="#ee7759"/>
<rect x="1347.21" y="421.25" width="6.85" height="1.00" fill="#5579af"/>
<rect x="1354.06" y="418.15" width="6.85" height="4.10" fill="#ee7759"/>
<rect x="1362.80" y="421.25" width="6.85" height="1.00" fill="#5579af"/>
<rect x="1369.64" y="419.25" width="6.85" height="3.00" fill="#ee7759"/>
<rect x="1378.38" y="421.25" width="6.85" height="1.00" fill="#5579af"/>
<rect x="1385.23" y="418.15" width="6.85" height="4.10" fill="#ee7759"/>
<rect x="1393.97" y="421.25" width="6.85" height="1.00" fill="#5579af"/>
<rect x="1400.82" y="418.15" width="6.85" height="4.10" fill="#ee7759"/>
<rect x="1409.55" y="421.25" width="6.85" height="1.00" fill="#5579af"/>
<rect x="1416.40" y="418.15" width="6.85" height="4.10" fill="#ee7759"/>
<rect x="1425.13" y="421.25" width="6.85" height="1.00" fill="#5579af"/>
<rect x="1431.98" y="418.15" width="6.85" height="4.10" fill="#ee7759"/>
<rect x="1440.72" y="421.25" width="6.85" height="1.00" fill="#5579af"/>
<rect x="1447.57" y="419.25" width="6.85" height="3.00" fill="#ee7759"/>
<rect x="1456.31" y="421.25" width="6.85" height="1.00" fill="#5579af"/>
<rect x="1463.15" y="419.25" width="6.85" height="3.00" fill="#ee7759"/>
<rect x="1471.89" y="421.25" width="6.85" height="1.00" fill="#5579af"/>
<rect x="1478.74" y="419.25" width="6.85" height="3.00" fill="#ee7759"/>
<rect x="1487.47" y="421.25" width="6.85" height="1.00" fill="#5579af"/>
<rect x="1494.32" y="419.25" width="6.85" height="3.00" fill="#ee7759"/>
<rect x="1503.06" y="421.45" width="6.85" height="0.80" fill="#5579af"/>
<rect x="1509.91" y="421.25" width="6.85" height="1.00" fill="#ee7759"/>
<rect x="1518.64" y="421.25" width="6.85" height="1.00" fill="#5579af"/>
<rect x="1525.49" y="420.25" width="6.85" height="2.00" fill="#ee7759"/>
<rect x="1534.23" y="421.25" width="6.85" height="1.00" fill="#5579af"/>
<rect x="1541.08" y="420.25" width="6.85" height="2.00" fill="#ee7759"/>
<rect x="1549.82" y="421.25" width="6.85" height="1.00" fill="#5579af"/>
<rect x="1556.66" y="420.25" width="6.85" height="2.00" fill="#ee7759"/>
<rect x="1565.40" y="421.25" width="6.85" height="1.00" fill="#5579af"/>
<rect x="1572.25" y="421.25" width="6.85" height="1.00" fill="#ee7759"/>
<rect x="1580.99" y="421.75" width="6.85" height="0.50" fill="#5579af"/>
<rect x="1587.84" y="421.25" width="6.85" height="1.00" fill="#ee7759"/>
<rect x="1596.57" y="421.75" width="6.85" height="0.50" fill="#5579af"/>
<rect x="1612.16" y="421.75" width="6.85" height="0.50" fill="#5579af"/>
<rect x="1627.74" y="421.75" width="6.85" height="0.50" fill="#5579af"/>
<rect x="1634.59" y="420.25" width="6.85" height="2.00" fill="#ee7759"/>
<rect x="1643.33" y="421.75" width="6.85" height="0.50" fill="#5579af"/>
<rect x="1650.17" y="421.25" width="6.85" height="1.00" fill="#ee7759"/>
<rect x="1658.91" y="421.75" width="6.85" height="0.50" fill="#5579af"/>
<rect x="1674.49" y="421.75" width="6.85" height="0.50" fill="#5579af"/>
<rect x="1681.34" y="421.25" width="6.85" height="1.00" fill="#ee7759"/>
<rect x="1690.08" y="421.75" width="6.85" height="0.50" fill="#5579af"/>
<rect x="1696.93" y="421.25" width="6.85" height="1.00" fill="#ee7759"/>
<rect x="1705.66" y="421.75" width="6.85" height="0.50" fill="#5579af"/>
<rect x="1712.51" y="421.25" width="6.85" height="1.00" fill="#ee7759"/>
<path d="M934.5,319.5H940.5V422.5H934.5 M1727.5,319.5H1721.5V422.5H1727.5 M940.5,422.5V428.5M1721.5,422.5V428.5 M934.5,423.00H940.5M1721.5,423.00H1727.5 M934.5,412.70H940.5M1721.5,412.70H1727.5 M934.5,402.40H940.5M1721.5,402.40H1727.5 M934.5,392.10H940.5M1721.5,392.10H1727.5 M934.5,381.80H940.5M1721.5,381.80H1727.5 M934.5,371.50H940.5M1721.5,371.50H1727.5 M934.5,361.20H940.5M1721.5,361.20H1727.5 M934.5,350.90H940.5M1721.5,350.90H1727.5 M934.5,340.60H940.5M1721.5,340.60H1727.5 M934.5,330.30H940.5M1721.5,330.30H1727.5 M948.85,422.5V428.5 M1026.77,422.5V428.5 M1104.70,422.5V428.5 M1198.21,422.5V428.5 M1276.13,422.5V428.5 M1369.64,422.5V428.5 M1447.57,422.5V428.5 M1541.08,422.5V428.5 M1619.01,422.5V428.5 M1712.51,422.5V428.5" stroke="#000" stroke-width="1" fill="none" shape-rendering="crispEdges"/>
<path d="M940.5,422.5H1721.5" stroke="#000" stroke-width="1" fill="none" shape-rendering="crispEdges"/>
<g font-family="Liberation Sans, sans-serif" font-size="9" fill="#333">
<text x="932" y="425.35" text-anchor="end">0.0</text>
<text x="932" y="415.05" text-anchor="end">420</text>
<text x="932" y="404.75" text-anchor="end">850</text>
<text x="932" y="394.45" text-anchor="end">1.3k</text>
<text x="932" y="384.15" text-anchor="end">1.7k</text>
<text x="932" y="373.85" text-anchor="end">2.1k</text>
<text x="932" y="363.55" text-anchor="end">2.5k</text>
<text x="932" y="353.25" text-anchor="end">3.0k</text>
<text x="932" y="342.95" text-anchor="end">3.4k</text>
<text x="932" y="332.65" text-anchor="end">3.8k</text>
<text x="1729.5" y="424.65">0.0</text>
<text x="1729.5" y="414.35">180</text>
<text x="1729.5" y="404.05">350</text>
<text x="1729.5" y="393.75">530</text>
<text x="1729.5" y="383.45">700</text>
<text x="1729.5" y="373.15">880</text>
<text x="1729.5" y="362.85">1.1k</text>
<text x="1729.5" y="352.55">1.2k</text>
<text x="1729.5" y="342.25">1.4k</text>
<text x="1729.5" y="331.95">1.6k</text>
<text x="948.85" y="437" text-anchor="middle">GET / HTTP/1.1</text>
<text x="1026.77" y="437" text-anchor="middle">GET /obituaries/2</text>
<text x="1104.70" y="437" text-anchor="middle">GET /obituaries/2</text>
<text x="1198.21" y="437" text-anchor="middle">GET /nuclei.svg?</text>
<text x="1276.13" y="437" text-anchor="middle">GET /obituaries/2</text>
<text x="1369.64" y="437" text-anchor="middle">GET /obituaries/4</text>
<text x="1447.57" y="437" text-anchor="middle">GET /obituaries/2</text>
<text x="1541.08" y="437" text-anchor="middle">GET /obituaries/2</text>
<text x="1619.01" y="437" text-anchor="middle">POST /obituaries</text>
<text x="1712.51" y="437" text-anchor="middle">GET /obituaries/2</text>
<rect x="1240.7" y="444.8" width="9" height="9" fill="#5579af"/><text x="1254.5" y="452.6">Hits</text>
<rect x="1330.2" y="444.8" width="9" height="9" fill="#ee7759"/><text x="1344" y="452.6">Visitors</text>
</g>
</svg>
<div style="position:absolute;right:1714.2px;top:467px;font-size:9px;line-height:40px;color:#333;font-weight:bold;letter-spacing:0.5px;white-space:nowrap;">#</div>
<div style="position:absolute;right:1623.5px;top:467px;font-size:9px;line-height:40px;color:#333;font-weight:bold;letter-spacing:0.5px;white-space:nowrap;">HITS</div>
<svg style="position:absolute;left:148px;top:482px" width="6" height="8" viewBox="0 0 6 8"><path fill="#333" d="M0,3.6 L3,0.2 L6,3.6 Z M0,4.7 L6,4.7 L3,8 Z"/></svg>
<div style="position:absolute;right:1524.6px;top:467px;font-size:9px;line-height:40px;color:#333;font-weight:bold;letter-spacing:0.5px;white-space:nowrap;">VISITORS</div>
<svg style="position:absolute;left:246px;top:482px" width="6" height="8" viewBox="0 0 6 8"><path fill="#333" d="M0,3.6 L3,0.2 L6,3.6 Z M0,4.7 L6,4.7 L3,8 Z"/></svg>
<div style="position:absolute;right:1417.3px;top:467px;font-size:9px;line-height:40px;color:#333;font-weight:bold;letter-spacing:0.5px;white-space:nowrap;">TX. AMOUNT</div>
<svg style="position:absolute;left:354px;top:482px" width="6" height="8" viewBox="0 0 6 8"><path fill="#333" d="M0,3.6 L3,0.2 L6,3.6 Z M0,4.7 L6,4.7 L3,8 Z"/></svg>
<div style="position:absolute;right:1349.6px;top:467px;font-size:9px;line-height:40px;color:#333;font-weight:bold;letter-spacing:0.5px;white-space:nowrap;">AVG. T.S.</div>
<svg style="position:absolute;left:421px;top:482px" width="6" height="8" viewBox="0 0 6 8"><path fill="#333" d="M0,3.6 L3,0.2 L6,3.6 Z M0,4.7 L6,4.7 L3,8 Z"/></svg>
<div style="position:absolute;right:1282.3px;top:467px;font-size:9px;line-height:40px;color:#333;font-weight:bold;letter-spacing:0.5px;white-space:nowrap;">CUM. T.S.</div>
<svg style="position:absolute;left:489px;top:482px" width="6" height="8" viewBox="0 0 6 8"><path fill="#333" d="M0,3.6 L3,0.2 L6,3.6 Z M0,4.7 L6,4.7 L3,8 Z"/></svg>
<div style="position:absolute;right:1215.4px;top:467px;font-size:9px;line-height:40px;color:#333;font-weight:bold;letter-spacing:0.5px;white-space:nowrap;">MAX. T.S.</div>
<svg style="position:absolute;left:556px;top:482px" width="6" height="8" viewBox="0 0 6 8"><path fill="#333" d="M0,3.6 L3,0.2 L6,3.6 Z M0,4.7 L6,4.7 L3,8 Z"/></svg>
<div style="position:absolute;left:576.6px;top:467px;font-size:9px;line-height:40px;color:#333;font-weight:bold;letter-spacing:0.5px;white-space:nowrap;">DATA</div>
<svg style="position:absolute;left:605px;top:484px" width="6" height="4" viewBox="0 0 6 4"><path fill="#333" d="M0,0 L6,0 L3,3.6 Z"/></svg>
<svg style="position:absolute;left:0;top:0" width="1769" height="905"><rect x="20" y="503.2" width="844" height="58.4" fill="#f7f7f7"/><rect x="20" y="500.8" width="844" height="1.35" fill="#222"/><rect x="20" y="562.5" width="844" height="1.7" fill="#222"/></svg>
<div style="position:absolute;left:61px;top:562px;width:1px;height:2px;background:#fff;"></div>
<div style="position:absolute;left:160px;top:562px;width:1px;height:2px;background:#fff;"></div>
<div style="position:absolute;left:259px;top:562px;width:1px;height:2px;background:#fff;"></div>
<div style="position:absolute;left:366px;top:562px;width:1px;height:2px;background:#fff;"></div>
<div style="position:absolute;left:434px;top:562px;width:1px;height:2px;background:#fff;"></div>
<div style="position:absolute;left:501px;top:562px;width:1px;height:2px;background:#fff;"></div>
<div style="position:absolute;left:568px;top:562px;width:1px;height:2px;background:#fff;"></div>
<div style="position:absolute;right:1714.2px;top:492px;font-size:10.6px;line-height:40px;color:#333;font-weight:bold;letter-spacing:0px;white-space:nowrap;">MIN.</div>
<div style="position:absolute;right:1615.5px;top:492px;font-size:10.6px;line-height:40px;color:#333;font-weight:normal;letter-spacing:0px;white-space:nowrap;">1 <span class="pc">(00.00%)</span></div>
<div style="position:absolute;right:1516.6px;top:492px;font-size:10.6px;line-height:40px;color:#333;font-weight:normal;letter-spacing:0px;white-space:nowrap;">1 <span class="pc">(00.00%)</span></div>
<div style="position:absolute;right:1409.3px;top:492px;font-size:10.6px;line-height:40px;color:#333;font-weight:normal;letter-spacing:0px;white-space:nowrap;">71 B <span class="pc">(00.00%)</span></div>
<div style="position:absolute;right:1341.6px;top:492px;font-size:10.6px;line-height:40px;color:#333;font-weight:normal;letter-spacing:0px;white-space:nowrap;">&mdash;</div>
<div style="position:absolute;right:1274.3px;top:492px;font-size:10.6px;line-height:40px;color:#333;font-weight:normal;letter-spacing:0px;white-space:nowrap;">5.00 us</div>
<div style="position:absolute;right:1207.4px;top:492px;font-size:10.6px;line-height:40px;color:#333;font-weight:normal;letter-spacing:0px;white-space:nowrap;">5.00 us</div>
<div style="position:absolute;right:912.5px;top:492px;font-size:10.6px;line-height:40px;color:#333;font-weight:normal;letter-spacing:0px;white-space:nowrap;">&mdash;</div>
<div style="position:absolute;right:1714.2px;top:512px;font-size:10.6px;line-height:40px;color:#333;font-weight:bold;letter-spacing:0px;white-space:nowrap;">MAX.</div>
<div style="position:absolute;right:1615.5px;top:512px;font-size:10.6px;line-height:40px;color:#333;font-weight:normal;letter-spacing:0px;white-space:nowrap;">521 <span class="pc">(00.91%)</span></div>
<div style="position:absolute;right:1516.6px;top:512px;font-size:10.6px;line-height:40px;color:#333;font-weight:normal;letter-spacing:0px;white-space:nowrap;">59 <span class="pc">(00.27%)</span></div>
<div style="position:absolute;right:1409.3px;top:512px;font-size:10.6px;line-height:40px;color:#333;font-weight:normal;letter-spacing:0px;white-space:nowrap;">1.38 GiB <span class="pc">(00.93%)</span></div>
<div style="position:absolute;right:1341.6px;top:512px;font-size:10.6px;line-height:40px;color:#333;font-weight:normal;letter-spacing:0px;white-space:nowrap;">&mdash;</div>
<div style="position:absolute;right:1274.3px;top:512px;font-size:10.6px;line-height:40px;color:#333;font-weight:normal;letter-spacing:0px;white-space:nowrap;">6.53 m</div>
<div style="position:absolute;right:1207.4px;top:512px;font-size:10.6px;line-height:40px;color:#333;font-weight:normal;letter-spacing:0px;white-space:nowrap;">6.53 m</div>
<div style="position:absolute;right:912.5px;top:512px;font-size:10.6px;line-height:40px;color:#333;font-weight:normal;letter-spacing:0px;white-space:nowrap;">&mdash;</div>
<div style="position:absolute;right:1714.2px;top:532px;font-size:10.6px;line-height:40px;color:#333;font-weight:bold;letter-spacing:0px;white-space:nowrap;">AVG.</div>
<div style="position:absolute;right:1615.5px;top:532px;font-size:10.6px;line-height:40px;color:#333;font-weight:normal;letter-spacing:0px;white-space:nowrap;">6 <span class="pc">(00.01%)</span></div>
<div style="position:absolute;right:1516.6px;top:532px;font-size:10.6px;line-height:40px;color:#333;font-weight:normal;letter-spacing:0px;white-space:nowrap;">2 <span class="pc">(00.01%)</span></div>
<div style="position:absolute;right:1409.3px;top:532px;font-size:10.6px;line-height:40px;color:#333;font-weight:normal;letter-spacing:0px;white-space:nowrap;">18.29 MiB <span class="pc">(00.01%)</span></div>
<div style="position:absolute;right:1341.6px;top:532px;font-size:10.6px;line-height:40px;color:#333;font-weight:normal;letter-spacing:0px;white-space:nowrap;">53.88 ms</div>
<div style="position:absolute;right:1274.3px;top:532px;font-size:10.6px;line-height:40px;color:#333;font-weight:normal;letter-spacing:0px;white-space:nowrap;">370.28 ms</div>
<div style="position:absolute;right:1207.4px;top:532px;font-size:10.6px;line-height:40px;color:#333;font-weight:normal;letter-spacing:0px;white-space:nowrap;">370.28 ms</div>
<div style="position:absolute;right:912.5px;top:532px;font-size:10.6px;line-height:40px;color:#333;font-weight:normal;letter-spacing:0px;white-space:nowrap;">&mdash;</div>
<svg style="position:absolute;left:0;top:0" width="1769" height="905"><rect x="20" y="593.33" width="844" height="29.33" fill="#f7f7f7"/></svg>
<svg style="position:absolute;left:0;top:0" width="1769" height="905"><rect x="20" y="651.99" width="844" height="29.33" fill="#f7f7f7"/></svg>
<svg style="position:absolute;left:0;top:0" width="1769" height="905"><rect x="20" y="710.65" width="844" height="29.33" fill="#f7f7f7"/></svg>
<div style="position:absolute;left:60.8px;top:564px;width:1px;height:206px;background:#ebebeb;"></div>
<div style="position:absolute;left:160.0px;top:564px;width:1px;height:206px;background:#ebebeb;"></div>
<div style="position:absolute;left:258.9px;top:564px;width:1px;height:206px;background:#ebebeb;"></div>
<div style="position:absolute;left:366.2px;top:564px;width:1px;height:206px;background:#ebebeb;"></div>
<div style="position:absolute;left:433.9px;top:564px;width:1px;height:206px;background:#ebebeb;"></div>
<div style="position:absolute;left:501.2px;top:564px;width:1px;height:206px;background:#ebebeb;"></div>
<div style="position:absolute;left:568.1px;top:564px;width:1px;height:206px;background:#ebebeb;"></div>
<div style="position:absolute;right:1715.2px;top:558px;font-size:10.6px;line-height:40px;color:#333;font-weight:bold;letter-spacing:0px;white-space:nowrap;">1</div>
<div style="position:absolute;right:1615.5px;top:558px;font-size:10.6px;line-height:40px;color:#333;font-weight:normal;letter-spacing:0px;white-space:nowrap;">2 <span class="pc">(00.00%)</span></div>
<div style="position:absolute;right:1516.6px;top:558px;font-size:10.6px;line-height:40px;color:#333;font-weight:normal;letter-spacing:0px;white-space:nowrap;">2 <span class="pc">(00.01%)</span></div>
<div style="position:absolute;right:1409.3px;top:558px;font-size:10.6px;line-height:40px;color:#333;font-weight:normal;letter-spacing:0px;white-space:nowrap;">7.9 KiB <span class="pc">(00.00%)</span></div>
<div style="position:absolute;right:1341.6px;top:558px;font-size:10.6px;line-height:40px;color:#333;font-weight:normal;letter-spacing:0px;white-space:nowrap;">22.84 ms</div>
<div style="position:absolute;right:1274.3px;top:558px;font-size:10.6px;line-height:40px;color:#333;font-weight:normal;letter-spacing:0px;white-space:nowrap;">45.69 ms</div>
<div style="position:absolute;right:1207.4px;top:558px;font-size:10.6px;line-height:40px;color:#333;font-weight:normal;letter-spacing:0px;white-space:nowrap;">30.53 ms</div>
<div style="position:absolute;left:576.6px;top:558px;font-size:10.6px;line-height:40px;color:#333;font-weight:normal;letter-spacing:0px;white-space:nowrap;">08/Jan/2024:<b>18:36</b></div>
<div style="position:absolute;right:1715.2px;top:588px;font-size:10.6px;line-height:40px;color:#333;font-weight:bold;letter-spacing:0px;white-space:nowrap;">2</div>
<div style="position:absolute;right:1615.5px;top:588px;font-size:10.6px;line-height:40px;color:#333;font-weight:normal;letter-spacing:0px;white-space:nowrap;">10 <span class="pc">(00.02%)</span></div>
<div style="position:absolute;right:1516.6px;top:588px;font-size:10.6px;line-height:40px;color:#333;font-weight:normal;letter-spacing:0px;white-space:nowrap;">3 <span class="pc">(00.01%)</span></div>
<div style="position:absolute;right:1409.3px;top:588px;font-size:10.6px;line-height:40px;color:#333;font-weight:normal;letter-spacing:0px;white-space:nowrap;">122.8 KiB <span class="pc">(00.00%)</span></div>
<div style="position:absolute;right:1341.6px;top:588px;font-size:10.6px;line-height:40px;color:#333;font-weight:normal;letter-spacing:0px;white-space:nowrap;">16.34 ms</div>
<div style="position:absolute;right:1274.3px;top:588px;font-size:10.6px;line-height:40px;color:#333;font-weight:normal;letter-spacing:0px;white-space:nowrap;">163.42 ms</div>
<div style="position:absolute;right:1207.4px;top:588px;font-size:10.6px;line-height:40px;color:#333;font-weight:normal;letter-spacing:0px;white-space:nowrap;">30.73 ms</div>
<div style="position:absolute;left:576.6px;top:588px;font-size:10.6px;line-height:40px;color:#333;font-weight:normal;letter-spacing:0px;white-space:nowrap;">08/Jan/2024:<b>18:34</b></div>
<div style="position:absolute;right:1715.2px;top:617px;font-size:10.6px;line-height:40px;color:#333;font-weight:bold;letter-spacing:0px;white-space:nowrap;">3</div>
<div style="position:absolute;right:1615.5px;top:617px;font-size:10.6px;line-height:40px;color:#333;font-weight:normal;letter-spacing:0px;white-space:nowrap;">1 <span class="pc">(00.00%)</span></div>
<div style="position:absolute;right:1516.6px;top:617px;font-size:10.6px;line-height:40px;color:#333;font-weight:normal;letter-spacing:0px;white-space:nowrap;">1 <span class="pc">(00.00%)</span></div>
<div style="position:absolute;right:1409.3px;top:617px;font-size:10.6px;line-height:40px;color:#333;font-weight:normal;letter-spacing:0px;white-space:nowrap;">555 B <span class="pc">(00.00%)</span></div>
<div style="position:absolute;right:1341.6px;top:617px;font-size:10.6px;line-height:40px;color:#333;font-weight:normal;letter-spacing:0px;white-space:nowrap;">331.00 us</div>
<div style="position:absolute;right:1274.3px;top:617px;font-size:10.6px;line-height:40px;color:#333;font-weight:normal;letter-spacing:0px;white-space:nowrap;">331.00 us</div>
<div style="position:absolute;right:1207.4px;top:617px;font-size:10.6px;line-height:40px;color:#333;font-weight:normal;letter-spacing:0px;white-space:nowrap;">331.00 us</div>
<div style="position:absolute;left:576.6px;top:617px;font-size:10.6px;line-height:40px;color:#333;font-weight:normal;letter-spacing:0px;white-space:nowrap;">08/Jan/2024:<b>18:33</b></div>
<div style="position:absolute;right:1715.2px;top:646px;font-size:10.6px;line-height:40px;color:#333;font-weight:bold;letter-spacing:0px;white-space:nowrap;">4</div>
<div style="position:absolute;right:1615.5px;top:646px;font-size:10.6px;line-height:40px;color:#333;font-weight:normal;letter-spacing:0px;white-space:nowrap;">1 <span class="pc">(00.00%)</span></div>
<div style="position:absolute;right:1516.6px;top:646px;font-size:10.6px;line-height:40px;color:#333;font-weight:normal;letter-spacing:0px;white-space:nowrap;">1 <span class="pc">(00.00%)</span></div>
<div style="position:absolute;right:1409.3px;top:646px;font-size:10.6px;line-height:40px;color:#333;font-weight:normal;letter-spacing:0px;white-space:nowrap;">3.1 KiB <span class="pc">(00.00%)</span></div>
<div style="position:absolute;right:1341.6px;top:646px;font-size:10.6px;line-height:40px;color:#333;font-weight:normal;letter-spacing:0px;white-space:nowrap;">229.52 ms</div>
<div style="position:absolute;right:1274.3px;top:646px;font-size:10.6px;line-height:40px;color:#333;font-weight:normal;letter-spacing:0px;white-space:nowrap;">229.52 ms</div>
<div style="position:absolute;right:1207.4px;top:646px;font-size:10.6px;line-height:40px;color:#333;font-weight:normal;letter-spacing:0px;white-space:nowrap;">229.52 ms</div>
<div style="position:absolute;left:576.6px;top:646px;font-size:10.6px;line-height:40px;color:#333;font-weight:normal;letter-spacing:0px;white-space:nowrap;">08/Jan/2024:<b>18:32</b></div>
<div style="position:absolute;right:1715.2px;top:676px;font-size:10.6px;line-height:40px;color:#333;font-weight:bold;letter-spacing:0px;white-space:nowrap;">5</div>
<div style="position:absolute;right:1615.5px;top:676px;font-size:10.6px;line-height:40px;color:#333;font-weight:normal;letter-spacing:0px;white-space:nowrap;">5 <span class="pc">(00.01%)</span></div>
<div style="position:absolute;right:1516.6px;top:676px;font-size:10.6px;line-height:40px;color:#333;font-weight:normal;letter-spacing:0px;white-space:nowrap;">3 <span class="pc">(00.01%)</span></div>
<div style="position:absolute;right:1409.3px;top:676px;font-size:10.6px;line-height:40px;color:#333;font-weight:normal;letter-spacing:0px;white-space:nowrap;">62.3 KiB <span class="pc">(00.00%)</span></div>
<div style="position:absolute;right:1341.6px;top:676px;font-size:10.6px;line-height:40px;color:#333;font-weight:normal;letter-spacing:0px;white-space:nowrap;">8.32 ms</div>
<div style="position:absolute;right:1274.3px;top:676px;font-size:10.6px;line-height:40px;color:#333;font-weight:normal;letter-spacing:0px;white-space:nowrap;">41.61 ms</div>
<div style="position:absolute;right:1207.4px;top:676px;font-size:10.6px;line-height:40px;color:#333;font-weight:normal;letter-spacing:0px;white-space:nowrap;">27.26 ms</div>
<div style="position:absolute;left:576.6px;top:676px;font-size:10.6px;line-height:40px;color:#333;font-weight:normal;letter-spacing:0px;white-space:nowrap;">08/Jan/2024:<b>18:31</b></div>
<div style="position:absolute;right:1715.2px;top:705px;font-size:10.6px;line-height:40px;color:#333;font-weight:bold;letter-spacing:0px;white-space:nowrap;">6</div>
<div style="position:absolute;right:1615.5px;top:705px;font-size:10.6px;line-height:40px;color:#333;font-weight:normal;letter-spacing:0px;white-space:nowrap;">13 <span class="pc">(00.02%)</span></div>
<div style="position:absolute;right:1516.6px;top:705px;font-size:10.6px;line-height:40px;color:#333;font-weight:normal;letter-spacing:0px;white-space:nowrap;">6 <span class="pc">(00.03%)</span></div>
<div style="position:absolute;right:1409.3px;top:705px;font-size:10.6px;line-height:40px;color:#333;font-weight:normal;letter-spacing:0px;white-space:nowrap;">211.7 KiB <span class="pc">(00.00%)</span></div>
<div style="position:absolute;right:1341.6px;top:705px;font-size:10.6px;line-height:40px;color:#333;font-weight:normal;letter-spacing:0px;white-space:nowrap;">5.58 ms</div>
<div style="position:absolute;right:1274.3px;top:705px;font-size:10.6px;line-height:40px;color:#333;font-weight:normal;letter-spacing:0px;white-space:nowrap;">72.59 ms</div>
<div style="position:absolute;right:1207.4px;top:705px;font-size:10.6px;line-height:40px;color:#333;font-weight:normal;letter-spacing:0px;white-space:nowrap;">20.39 ms</div>
<div style="position:absolute;left:576.6px;top:705px;font-size:10.6px;line-height:40px;color:#333;font-weight:normal;letter-spacing:0px;white-space:nowrap;">08/Jan/2024:<b>18:30</b></div>
<div style="position:absolute;right:1715.2px;top:734px;font-size:10.6px;line-height:40px;color:#333;font-weight:bold;letter-spacing:0px;white-space:nowrap;">7</div>
<div style="position:absolute;right:1615.5px;top:734px;font-size:10.6px;line-height:40px;color:#333;font-weight:normal;letter-spacing:0px;white-space:nowrap;">2 <span class="pc">(00.00%)</span></div>
<div style="position:absolute;right:1516.6px;top:734px;font-size:10.6px;line-height:40px;color:#333;font-weight:normal;letter-spacing:0px;white-space:nowrap;">2 <span class="pc">(00.01%)</span></div>
<div style="position:absolute;right:1409.3px;top:734px;font-size:10.6px;line-height:40px;color:#333;font-weight:normal;letter-spacing:0px;white-space:nowrap;">5.4 KiB <span class="pc">(00.00%)</span></div>
<div style="position:absolute;right:1341.6px;top:734px;font-size:10.6px;line-height:40px;color:#333;font-weight:normal;letter-spacing:0px;white-space:nowrap;">501.00 us</div>
<div style="position:absolute;right:1274.3px;top:734px;font-size:10.6px;line-height:40px;color:#333;font-weight:normal;letter-spacing:0px;white-space:nowrap;">1.00 ms</div>
<div style="position:absolute;right:1207.4px;top:734px;font-size:10.6px;line-height:40px;color:#333;font-weight:normal;letter-spacing:0px;white-space:nowrap;">762.00 us</div>
<div style="position:absolute;left:576.6px;top:734px;font-size:10.6px;line-height:40px;color:#333;font-weight:normal;letter-spacing:0px;white-space:nowrap;">08/Jan/2024:<b>18:29</b></div>
<div style="position:absolute;left:20px;top:770px;width:844px;height:0;border-top:1px dotted #000;"></div>
<div style="position:absolute;right:1714.7px;top:766px;font-size:12px;line-height:40px;color:#333;font-weight:bold;letter-spacing:0.35px;white-space:nowrap;">TOT.</div>
<div style="position:absolute;right:1616.0px;top:766px;font-size:12px;line-height:40px;color:#333;font-weight:bold;letter-spacing:0.35px;white-space:nowrap;">57,138</div>
<div style="position:absolute;right:1517.1px;top:766px;font-size:12px;line-height:40px;color:#333;font-weight:bold;letter-spacing:0.35px;white-space:nowrap;">21,513</div>
<div style="position:absolute;right:1409.8px;top:766px;font-size:12px;line-height:40px;color:#333;font-weight:bold;letter-spacing:0.35px;white-space:nowrap;">148.56 GiB</div>
<div style="position:absolute;right:1342.1px;top:766px;font-size:10.6px;line-height:40px;color:#333;font-weight:normal;letter-spacing:0px;white-space:nowrap;">&mdash;</div>
<div style="position:absolute;right:1274.8px;top:766px;font-size:12px;line-height:40px;color:#333;font-weight:bold;letter-spacing:0.35px;white-space:nowrap;">51.31 m</div>
<div style="position:absolute;right:1207.9px;top:766px;font-size:12px;line-height:40px;color:#333;font-weight:bold;letter-spacing:0.35px;white-space:nowrap;">51.31 m</div>
<div style="position:absolute;left:576.6px;top:766px;font-size:12px;line-height:40px;color:#333;font-weight:bold;letter-spacing:0.35px;white-space:nowrap;">8,315</div>
<div style="position:absolute;right:825.3px;top:467px;font-size:9px;line-height:40px;color:#333;font-weight:bold;letter-spacing:0.5px;white-space:nowrap;">#</div>
<div style="position:absolute;right:747.2px;top:467px;font-size:9px;line-height:40px;color:#333;font-weight:bold;letter-spacing:0.5px;white-space:nowrap;">HITS</div>
<svg style="position:absolute;left:1024px;top:484px" width="6" height="4" viewBox="0 0 6 4"><path fill="#333" d="M0,0 L6,0 L3,3.6 Z"/></svg>
<div style="position:absolute;right:659.5999999999999px;top:467px;font-size:9px;line-height:40px;color:#333;font-weight:bold;letter-spacing:0.5px;white-space:nowrap;">VISITORS</div>
<svg style="position:absolute;left:1111px;top:482px" width="6" height="8" viewBox="0 0 6 8"><path fill="#333" d="M0,3.6 L3,0.2 L6,3.6 Z M0,4.7 L6,4.7 L3,8 Z"/></svg>
<div style="position:absolute;right:552.7px;top:467px;font-size:9px;line-height:40px;color:#333;font-weight:bold;letter-spacing:0.5px;white-space:nowrap;">TX. AMOUNT</div>
<svg style="position:absolute;left:1218px;top:482px" width="6" height="8" viewBox="0 0 6 8"><path fill="#333" d="M0,3.6 L3,0.2 L6,3.6 Z M0,4.7 L6,4.7 L3,8 Z"/></svg>
<div style="position:absolute;right:486.5px;top:467px;font-size:9px;line-height:40px;color:#333;font-weight:bold;letter-spacing:0.5px;white-space:nowrap;">AVG. T.S.</div>
<svg style="position:absolute;left:1284px;top:482px" width="6" height="8" viewBox="0 0 6 8"><path fill="#333" d="M0,3.6 L3,0.2 L6,3.6 Z M0,4.7 L6,4.7 L3,8 Z"/></svg>
<div style="position:absolute;right:419.5px;top:467px;font-size:9px;line-height:40px;color:#333;font-weight:bold;letter-spacing:0.5px;white-space:nowrap;">CUM. T.S.</div>
<svg style="position:absolute;left:1352px;top:482px" width="6" height="8" viewBox="0 0 6 8"><path fill="#333" d="M0,3.6 L3,0.2 L6,3.6 Z M0,4.7 L6,4.7 L3,8 Z"/></svg>
<div style="position:absolute;right:352.5999999999999px;top:467px;font-size:9px;line-height:40px;color:#333;font-weight:bold;letter-spacing:0.5px;white-space:nowrap;">MAX. T.S.</div>
<svg style="position:absolute;left:1418px;top:482px" width="6" height="8" viewBox="0 0 6 8"><path fill="#333" d="M0,3.6 L3,0.2 L6,3.6 Z M0,4.7 L6,4.7 L3,8 Z"/></svg>
<div style="position:absolute;right:287.5px;top:467px;font-size:9px;line-height:40px;color:#333;font-weight:bold;letter-spacing:0.5px;white-space:nowrap;">METHOD</div>
<svg style="position:absolute;left:1484px;top:482px" width="6" height="8" viewBox="0 0 6 8"><path fill="#333" d="M0,3.6 L3,0.2 L6,3.6 Z M0,4.7 L6,4.7 L3,8 Z"/></svg>
<div style="position:absolute;right:209.5px;top:467px;font-size:9px;line-height:40px;color:#333;font-weight:bold;letter-spacing:0.5px;white-space:nowrap;">PROTOCOL</div>
<svg style="position:absolute;left:1562px;top:482px" width="6" height="8" viewBox="0 0 6 8"><path fill="#333" d="M0,3.6 L3,0.2 L6,3.6 Z M0,4.7 L6,4.7 L3,8 Z"/></svg>
<div style="position:absolute;left:1582.4px;top:467px;font-size:9px;line-height:40px;color:#333;font-weight:bold;letter-spacing:0.5px;white-space:nowrap;">DATA</div>
<svg style="position:absolute;left:1611px;top:482px" width="6" height="8" viewBox="0 0 6 8"><path fill="#333" d="M0,3.6 L3,0.2 L6,3.6 Z M0,4.7 L6,4.7 L3,8 Z"/></svg>
<svg style="position:absolute;left:0;top:0" width="1769" height="905"><rect x="909" y="503.2" width="844" height="58.4" fill="#f7f7f7"/><rect x="909" y="500.8" width="844" height="1.35" fill="#222"/><rect x="909" y="562.5" width="844" height="1.7" fill="#222"/></svg>
<div style="position:absolute;left:950px;top:562px;width:1px;height:2px;background:#fff;"></div>
<div style="position:absolute;left:1037px;top:562px;width:1px;height:2px;background:#fff;"></div>
<div style="position:absolute;left:1124px;top:562px;width:1px;height:2px;background:#fff;"></div>
<div style="position:absolute;left:1231px;top:562px;width:1px;height:2px;background:#fff;"></div>
<div style="position:absolute;left:1297px;top:562px;width:1px;height:2px;background:#fff;"></div>
<div style="position:absolute;left:1364px;top:562px;width:1px;height:2px;background:#fff;"></div>
<div style="position:absolute;left:1431px;top:562px;width:1px;height:2px;background:#fff;"></div>
<div style="position:absolute;left:1496px;top:562px;width:1px;height:2px;background:#fff;"></div>
<div style="position:absolute;left:1574px;top:562px;width:1px;height:2px;background:#fff;"></div>
<div style="position:absolute;right:825.3px;top:492px;font-size:10.6px;line-height:40px;color:#333;font-weight:bold;letter-spacing:0px;white-space:nowrap;">MIN.</div>
<div style="position:absolute;right:738.7px;top:492px;font-size:10.6px;line-height:40px;color:#333;font-weight:normal;letter-spacing:0px;white-space:nowrap;">1 <span class="pc">(00.00%)</span></div>
<div style="position:absolute;right:651.5999999999999px;top:492px;font-size:10.6px;line-height:40px;color:#333;font-weight:normal;letter-spacing:0px;white-space:nowrap;">1 <span class="pc">(00.00%)</span></div>
<div style="position:absolute;right:544.7px;top:492px;font-size:10.6px;line-height:40px;color:#333;font-weight:normal;letter-spacing:0px;white-space:nowrap;">&mdash;</div>
<div style="position:absolute;right:478.5px;top:492px;font-size:10.6px;line-height:40px;color:#333;font-weight:normal;letter-spacing:0px;white-space:nowrap;">&mdash;</div>
<div style="position:absolute;right:411.5px;top:492px;font-size:10.6px;line-height:40px;color:#333;font-weight:normal;letter-spacing:0px;white-space:nowrap;">45.00 us</div>
<div style="position:absolute;right:344.5999999999999px;top:492px;font-size:10.6px;line-height:40px;color:#333;font-weight:normal;letter-spacing:0px;white-space:nowrap;">38.00 us</div>
<div style="position:absolute;right:279.5px;top:492px;font-size:10.6px;line-height:40px;color:#333;font-weight:normal;letter-spacing:0px;white-space:nowrap;">&mdash;</div>
<div style="position:absolute;right:201.5px;top:492px;font-size:10.6px;line-height:40px;color:#333;font-weight:normal;letter-spacing:0px;white-space:nowrap;">&mdash;</div>
<div style="position:absolute;right:21.5px;top:492px;font-size:10.6px;line-height:40px;color:#333;font-weight:normal;letter-spacing:0px;white-space:nowrap;">&mdash;</div>
<div style="position:absolute;right:825.3px;top:512px;font-size:10.6px;line-height:40px;color:#333;font-weight:bold;letter-spacing:0px;white-space:nowrap;">MAX.</div>
<div style="position:absolute;right:738.7px;top:512px;font-size:10.6px;line-height:40px;color:#333;font-weight:normal;letter-spacing:0px;white-space:nowrap;">4,228 <span class="pc">(14.80%)</span></div>
<div style="position:absolute;right:651.5999999999999px;top:512px;font-size:10.6px;line-height:40px;color:#333;font-weight:normal;letter-spacing:0px;white-space:nowrap;">1,754 <span class="pc">(08.22%)</span></div>
<div style="position:absolute;right:544.7px;top:512px;font-size:10.6px;line-height:40px;color:#333;font-weight:normal;letter-spacing:0px;white-space:nowrap;">24.95 MiB <span class="pc">(19.71%)</span></div>
<div style="position:absolute;right:478.5px;top:512px;font-size:10.6px;line-height:40px;color:#333;font-weight:normal;letter-spacing:0px;white-space:nowrap;">&mdash;</div>
<div style="position:absolute;right:411.5px;top:512px;font-size:10.6px;line-height:40px;color:#333;font-weight:normal;letter-spacing:0px;white-space:nowrap;">32.25 s</div>
<div style="position:absolute;right:344.5999999999999px;top:512px;font-size:10.6px;line-height:40px;color:#333;font-weight:normal;letter-spacing:0px;white-space:nowrap;">8.41 s</div>
<div style="position:absolute;right:279.5px;top:512px;font-size:10.6px;line-height:40px;color:#333;font-weight:normal;letter-spacing:0px;white-space:nowrap;">&mdash;</div>
<div style="position:absolute;right:201.5px;top:512px;font-size:10.6px;line-height:40px;color:#333;font-weight:normal;letter-spacing:0px;white-space:nowrap;">&mdash;</div>
<div style="position:absolute;right:21.5px;top:512px;font-size:10.6px;line-height:40px;color:#333;font-weight:normal;letter-spacing:0px;white-space:nowrap;">&mdash;</div>
<div style="position:absolute;right:825.3px;top:532px;font-size:10.6px;line-height:40px;color:#333;font-weight:bold;letter-spacing:0px;white-space:nowrap;">AVG.</div>
<div style="position:absolute;right:738.7px;top:532px;font-size:10.6px;line-height:40px;color:#333;font-weight:normal;letter-spacing:0px;white-space:nowrap;">3 <span class="pc">(00.01%)</span></div>
<div style="position:absolute;right:651.5999999999999px;top:532px;font-size:10.6px;line-height:40px;color:#333;font-weight:normal;letter-spacing:0px;white-space:nowrap;">2 <span class="pc">(00.01%)</span></div>
<div style="position:absolute;right:544.7px;top:532px;font-size:10.6px;line-height:40px;color:#333;font-weight:normal;letter-spacing:0px;white-space:nowrap;">16.86 KiB <span class="pc">(00.01%)</span></div>
<div style="position:absolute;right:478.5px;top:532px;font-size:10.6px;line-height:40px;color:#333;font-weight:normal;letter-spacing:0px;white-space:nowrap;">15.96 ms</div>
<div style="position:absolute;right:411.5px;top:532px;font-size:10.6px;line-height:40px;color:#333;font-weight:normal;letter-spacing:0px;white-space:nowrap;">59.31 ms</div>
<div style="position:absolute;right:344.5999999999999px;top:532px;font-size:10.6px;line-height:40px;color:#333;font-weight:normal;letter-spacing:0px;white-space:nowrap;">59.31 ms</div>
<div style="position:absolute;right:279.5px;top:532px;font-size:10.6px;line-height:40px;color:#333;font-weight:normal;letter-spacing:0px;white-space:nowrap;">&mdash;</div>
<div style="position:absolute;right:201.5px;top:532px;font-size:10.6px;line-height:40px;color:#333;font-weight:normal;letter-spacing:0px;white-space:nowrap;">&mdash;</div>
<div style="position:absolute;right:21.5px;top:532px;font-size:10.6px;line-height:40px;color:#333;font-weight:normal;letter-spacing:0px;white-space:nowrap;">&mdash;</div>
<svg style="position:absolute;left:0;top:0" width="1769" height="905"><rect x="909" y="597.00" width="844" height="33.00" fill="#f7f7f7"/></svg>
<svg style="position:absolute;left:0;top:0" width="1769" height="905"><rect x="909" y="663.00" width="844" height="33.00" fill="#f7f7f7"/></svg>
<svg style="position:absolute;left:0;top:0" width="1769" height="905"><rect x="909" y="729.00" width="844" height="33.00" fill="#f7f7f7"/></svg>
<div style="position:absolute;left:949.7px;top:564px;width:1px;height:231px;background:#ebebeb;"></div>
<div style="position:absolute;left:1036.8px;top:564px;width:1px;height:231px;background:#ebebeb;"></div>
<div style="position:absolute;left:1123.9px;top:564px;width:1px;height:231px;background:#ebebeb;"></div>
<div style="position:absolute;left:1230.8px;top:564px;width:1px;height:231px;background:#ebebeb;"></div>
<div style="position:absolute;left:1297.0px;top:564px;width:1px;height:231px;background:#ebebeb;"></div>
<div style="position:absolute;left:1364.0px;top:564px;width:1px;height:231px;background:#ebebeb;"></div>
<div style="position:absolute;left:1430.9px;top:564px;width:1px;height:231px;background:#ebebeb;"></div>
<div style="position:absolute;left:1496.0px;top:564px;width:1px;height:231px;background:#ebebeb;"></div>
<div style="position:absolute;left:1574.0px;top:564px;width:1px;height:231px;background:#ebebeb;"></div>
<div style="position:absolute;right:826.3px;top:558px;font-size:10.6px;line-height:40px;color:#333;font-weight:bold;letter-spacing:0px;white-space:nowrap;">1</div>
<div style="position:absolute;right:738.7px;top:558px;font-size:10.6px;line-height:40px;color:#333;font-weight:normal;letter-spacing:0px;white-space:nowrap;">4,228 <span class="pc">(07.40%)</span></div>
<div style="position:absolute;right:651.5999999999999px;top:558px;font-size:10.6px;line-height:40px;color:#333;font-weight:normal;letter-spacing:0px;white-space:nowrap;">1,754 <span class="pc">(08.15%)</span></div>
<div style="position:absolute;right:544.7px;top:558px;font-size:10.6px;line-height:40px;color:#333;font-weight:normal;letter-spacing:0px;white-space:nowrap;">25 MiB <span class="pc">(00.02%)</span></div>
<div style="position:absolute;right:478.5px;top:558px;font-size:10.6px;line-height:40px;color:#333;font-weight:normal;letter-spacing:0px;white-space:nowrap;">5.03 ms</div>
<div style="position:absolute;right:411.5px;top:558px;font-size:10.6px;line-height:40px;color:#333;font-weight:normal;letter-spacing:0px;white-space:nowrap;">21.28 s</div>
<div style="position:absolute;right:344.5999999999999px;top:558px;font-size:10.6px;line-height:40px;color:#333;font-weight:normal;letter-spacing:0px;white-space:nowrap;">786.55 ms</div>
<div style="position:absolute;left:1439.2px;top:571.2px;width:49.7px;height:18.7px;background:#7e649d;border-radius:4px;"></div>
<div style="position:absolute;left:964.05px;width:1000px;text-align:center;top:560px;font-size:10.9px;line-height:40px;color:#fff;font-weight:bold;letter-spacing:0px;white-space:nowrap;">GET</div>
<div style="position:absolute;left:1505.2px;top:571.2px;width:61.5px;height:18.7px;background:#d5d5d5;border-radius:4px;"></div>
<div style="position:absolute;left:1035.95px;width:1000px;text-align:center;top:560px;font-size:10.9px;line-height:40px;color:#fff;font-weight:bold;letter-spacing:0px;white-space:nowrap;">HTTP/1.1</div>
<div style="position:absolute;left:1582.4px;top:558px;font-size:10.6px;line-height:40px;color:#333;font-weight:normal;letter-spacing:0px;white-space:nowrap;">/</div>
<div style="position:absolute;right:826.3px;top:591px;font-size:10.6px;line-height:40px;color:#333;font-weight:bold;letter-spacing:0px;white-space:nowrap;">2</div>
<div style="position:absolute;right:738.7px;top:591px;font-size:10.6px;line-height:40px;color:#333;font-weight:normal;letter-spacing:0px;white-space:nowrap;">2,045 <span class="pc">(03.58%)</span></div>
<div style="position:absolute;right:651.5999999999999px;top:591px;font-size:10.6px;line-height:40px;color:#333;font-weight:normal;letter-spacing:0px;white-space:nowrap;">1,170 <span class="pc">(05.44%)</span></div>
<div style="position:absolute;right:544.7px;top:591px;font-size:10.6px;line-height:40px;color:#333;font-weight:normal;letter-spacing:0px;white-space:nowrap;">6.4 MiB <span class="pc">(00.00%)</span></div>
<div style="position:absolute;right:478.5px;top:591px;font-size:10.6px;line-height:40px;color:#333;font-weight:normal;letter-spacing:0px;white-space:nowrap;">15.77 ms</div>
<div style="position:absolute;right:411.5px;top:591px;font-size:10.6px;line-height:40px;color:#333;font-weight:normal;letter-spacing:0px;white-space:nowrap;">32.25 s</div>
<div style="position:absolute;right:344.5999999999999px;top:591px;font-size:10.6px;line-height:40px;color:#333;font-weight:normal;letter-spacing:0px;white-space:nowrap;">1.72 s</div>
<div style="position:absolute;left:1439.2px;top:604.2px;width:49.7px;height:18.7px;background:#7e649d;border-radius:4px;"></div>
<div style="position:absolute;left:964.05px;width:1000px;text-align:center;top:593px;font-size:10.9px;line-height:40px;color:#fff;font-weight:bold;letter-spacing:0px;white-space:nowrap;">GET</div>
<div style="position:absolute;left:1505.2px;top:604.2px;width:61.5px;height:18.7px;background:#c0c0c0;border-radius:4px;"></div>
<div style="position:absolute;left:1035.95px;width:1000px;text-align:center;top:593px;font-size:10.9px;line-height:40px;color:#fff;font-weight:bold;letter-spacing:0px;white-space:nowrap;">HTTP/2</div>
<div style="position:absolute;left:1582.4px;top:591px;font-size:10.6px;line-height:40px;color:#333;font-weight:normal;letter-spacing:0px;white-space:nowrap;">/obituaries</div>
<div style="position:absolute;right:826.3px;top:624px;font-size:10.6px;line-height:40px;color:#333;font-weight:bold;letter-spacing:0px;white-space:nowrap;">3</div>
<div style="position:absolute;right:738.7px;top:624px;font-size:10.6px;line-height:40px;color:#333;font-weight:normal;letter-spacing:0px;white-space:nowrap;">1,477 <span class="pc">(02.58%)</span></div>
<div style="position:absolute;right:651.5999999999999px;top:624px;font-size:10.6px;line-height:40px;color:#333;font-weight:normal;letter-spacing:0px;white-space:nowrap;">1,176 <span class="pc">(05.47%)</span></div>
<div style="position:absolute;right:544.7px;top:624px;font-size:10.6px;line-height:40px;color:#333;font-weight:normal;letter-spacing:0px;white-space:nowrap;">3.3 MiB <span class="pc">(00.00%)</span></div>
<div style="position:absolute;right:478.5px;top:624px;font-size:10.6px;line-height:40px;color:#333;font-weight:normal;letter-spacing:0px;white-space:nowrap;">5.74 ms</div>
<div style="position:absolute;right:411.5px;top:624px;font-size:10.6px;line-height:40px;color:#333;font-weight:normal;letter-spacing:0px;white-space:nowrap;">8.47 s</div>
<div style="position:absolute;right:344.5999999999999px;top:624px;font-size:10.6px;line-height:40px;color:#333;font-weight:normal;letter-spacing:0px;white-space:nowrap;">312.16 ms</div>
<div style="position:absolute;left:1439.2px;top:637.2px;width:49.7px;height:18.7px;background:#7e649d;border-radius:4px;"></div>
<div style="position:absolute;left:964.05px;width:1000px;text-align:center;top:626px;font-size:10.9px;line-height:40px;color:#fff;font-weight:bold;letter-spacing:0px;white-space:nowrap;">GET</div>
<div style="position:absolute;left:1505.2px;top:637.2px;width:61.5px;height:18.7px;background:#c0c0c0;border-radius:4px;"></div>
<div style="position:absolute;left:1035.95px;width:1000px;text-align:center;top:626px;font-size:10.9px;line-height:40px;color:#fff;font-weight:bold;letter-spacing:0px;white-space:nowrap;">HTTP/2</div>
<div style="position:absolute;left:1582.4px;top:624px;font-size:10.6px;line-height:40px;color:#333;font-weight:normal;letter-spacing:0px;white-space:nowrap;">/</div>
<div style="position:absolute;right:826.3px;top:657px;font-size:10.6px;line-height:40px;color:#333;font-weight:bold;letter-spacing:0px;white-space:nowrap;">4</div>
<div style="position:absolute;right:738.7px;top:657px;font-size:10.6px;line-height:40px;color:#333;font-weight:normal;letter-spacing:0px;white-space:nowrap;">954 <span class="pc">(01.67%)</span></div>
<div style="position:absolute;right:651.5999999999999px;top:657px;font-size:10.6px;line-height:40px;color:#333;font-weight:normal;letter-spacing:0px;white-space:nowrap;">62 <span class="pc">(00.29%)</span></div>
<div style="position:absolute;right:544.7px;top:657px;font-size:10.6px;line-height:40px;color:#333;font-weight:normal;letter-spacing:0px;white-space:nowrap;">279 KiB <span class="pc">(00.00%)</span></div>
<div style="position:absolute;right:478.5px;top:657px;font-size:10.6px;line-height:40px;color:#333;font-weight:normal;letter-spacing:0px;white-space:nowrap;">155.00 us</div>
<div style="position:absolute;right:411.5px;top:657px;font-size:10.6px;line-height:40px;color:#333;font-weight:normal;letter-spacing:0px;white-space:nowrap;">148.02 ms</div>
<div style="position:absolute;right:344.5999999999999px;top:657px;font-size:10.6px;line-height:40px;color:#333;font-weight:normal;letter-spacing:0px;white-space:nowrap;">12.02 ms</div>
<div style="position:absolute;left:1439.2px;top:670.2px;width:49.7px;height:18.7px;background:#b692cf;border-radius:4px;"></div>
<div style="position:absolute;left:964.05px;width:1000px;text-align:center;top:659px;font-size:10.9px;line-height:40px;color:#fff;font-weight:bold;letter-spacing:0px;white-space:nowrap;">HEAD</div>
<div style="position:absolute;left:1505.2px;top:670.2px;width:61.5px;height:18.7px;background:#d5d5d5;border-radius:4px;"></div>
<div style="position:absolute;left:1035.95px;width:1000px;text-align:center;top:659px;font-size:10.9px;line-height:40px;color:#fff;font-weight:bold;letter-spacing:0px;white-space:nowrap;">HTTP/1.1</div>
<div style="position:absolute;left:1582.4px;top:657px;font-size:10.6px;line-height:40px;color:#333;font-weight:normal;letter-spacing:0px;white-space:nowrap;">/</div>
<div style="position:absolute;right:826.3px;top:690px;font-size:10.6px;line-height:40px;color:#333;font-weight:bold;letter-spacing:0px;white-space:nowrap;">5</div>
<div style="position:absolute;right:738.7px;top:690px;font-size:10.6px;line-height:40px;color:#333;font-weight:normal;letter-spacing:0px;white-space:nowrap;">717 <span class="pc">(01.25%)</span></div>
<div style="position:absolute;right:651.5999999999999px;top:690px;font-size:10.6px;line-height:40px;color:#333;font-weight:normal;letter-spacing:0px;white-space:nowrap;">0 <span class="pc">(00.00%)</span></div>
<div style="position:absolute;right:544.7px;top:690px;font-size:10.6px;line-height:40px;color:#333;font-weight:normal;letter-spacing:0px;white-space:nowrap;">199.5 KiB <span class="pc">(00.00%)</span></div>
<div style="position:absolute;right:478.5px;top:690px;font-size:10.6px;line-height:40px;color:#333;font-weight:normal;letter-spacing:0px;white-space:nowrap;">645.00 us</div>
<div style="position:absolute;right:411.5px;top:690px;font-size:10.6px;line-height:40px;color:#333;font-weight:normal;letter-spacing:0px;white-space:nowrap;">462.89 ms</div>
<div style="position:absolute;right:344.5999999999999px;top:690px;font-size:10.6px;line-height:40px;color:#333;font-weight:normal;letter-spacing:0px;white-space:nowrap;">12.41 ms</div>
<div style="position:absolute;left:1439.2px;top:703.2px;width:49.7px;height:18.7px;background:#7e649d;border-radius:4px;"></div>
<div style="position:absolute;left:964.05px;width:1000px;text-align:center;top:692px;font-size:10.9px;line-height:40px;color:#fff;font-weight:bold;letter-spacing:0px;white-space:nowrap;">GET</div>
<div style="position:absolute;left:1505.2px;top:703.2px;width:61.5px;height:18.7px;background:#c0c0c0;border-radius:4px;"></div>
<div style="position:absolute;left:1035.95px;width:1000px;text-align:center;top:692px;font-size:10.9px;line-height:40px;color:#fff;font-weight:bold;letter-spacing:0px;white-space:nowrap;">HTTP/2</div>
<div style="position:absolute;left:1582.4px;top:690px;font-size:10.6px;line-height:40px;color:#333;font-weight:normal;letter-spacing:0px;white-space:nowrap;">/css/</div>
<div style="position:absolute;right:826.3px;top:723px;font-size:10.6px;line-height:40px;color:#333;font-weight:bold;letter-spacing:0px;white-space:nowrap;">6</div>
<div style="position:absolute;right:738.7px;top:723px;font-size:10.6px;line-height:40px;color:#333;font-weight:normal;letter-spacing:0px;white-space:nowrap;">321 <span class="pc">(00.56%)</span></div>
<div style="position:absolute;right:651.5999999999999px;top:723px;font-size:10.6px;line-height:40px;color:#333;font-weight:normal;letter-spacing:0px;white-space:nowrap;">286 <span class="pc">(01.33%)</span></div>
<div style="position:absolute;right:544.7px;top:723px;font-size:10.6px;line-height:40px;color:#333;font-weight:normal;letter-spacing:0px;white-space:nowrap;">1.2 MiB <span class="pc">(00.00%)</span></div>
<div style="position:absolute;right:478.5px;top:723px;font-size:10.6px;line-height:40px;color:#333;font-weight:normal;letter-spacing:0px;white-space:nowrap;">8.47 ms</div>
<div style="position:absolute;right:411.5px;top:723px;font-size:10.6px;line-height:40px;color:#333;font-weight:normal;letter-spacing:0px;white-space:nowrap;">2.72 s</div>
<div style="position:absolute;right:344.5999999999999px;top:723px;font-size:10.6px;line-height:40px;color:#333;font-weight:normal;letter-spacing:0px;white-space:nowrap;">62.19 ms</div>
<div style="position:absolute;left:1439.2px;top:736.2px;width:49.7px;height:18.7px;background:#7e649d;border-radius:4px;"></div>
<div style="position:absolute;left:964.05px;width:1000px;text-align:center;top:725px;font-size:10.9px;line-height:40px;color:#fff;font-weight:bold;letter-spacing:0px;white-space:nowrap;">GET</div>
<div style="position:absolute;left:1505.2px;top:736.2px;width:61.5px;height:18.7px;background:#c0c0c0;border-radius:4px;"></div>
<div style="position:absolute;left:1035.95px;width:1000px;text-align:center;top:725px;font-size:10.9px;line-height:40px;color:#fff;font-weight:bold;letter-spacing:0px;white-space:nowrap;">HTTP/2</div>
<div style="position:absolute;left:1582.4px;top:723px;font-size:10.6px;line-height:40px;color:#333;font-weight:normal;letter-spacing:0px;white-space:nowrap;">/obituaries/2396/sharon-lilla</div>
<div style="position:absolute;right:826.3px;top:756px;font-size:10.6px;line-height:40px;color:#333;font-weight:bold;letter-spacing:0px;white-space:nowrap;">7</div>
<div style="position:absolute;right:738.7px;top:756px;font-size:10.6px;line-height:40px;color:#333;font-weight:normal;letter-spacing:0px;white-space:nowrap;">317 <span class="pc">(00.55%)</span></div>
<div style="position:absolute;right:651.5999999999999px;top:756px;font-size:10.6px;line-height:40px;color:#333;font-weight:normal;letter-spacing:0px;white-space:nowrap;">278 <span class="pc">(01.29%)</span></div>
<div style="position:absolute;right:544.7px;top:756px;font-size:10.6px;line-height:40px;color:#333;font-weight:normal;letter-spacing:0px;white-space:nowrap;">2.5 MiB <span class="pc">(00.00%)</span></div>
<div style="position:absolute;right:478.5px;top:756px;font-size:10.6px;line-height:40px;color:#333;font-weight:normal;letter-spacing:0px;white-space:nowrap;">8.48 ms</div>
<div style="position:absolute;right:411.5px;top:756px;font-size:10.6px;line-height:40px;color:#333;font-weight:normal;letter-spacing:0px;white-space:nowrap;">2.69 s</div>
<div style="position:absolute;right:344.5999999999999px;top:756px;font-size:10.6px;line-height:40px;color:#333;font-weight:normal;letter-spacing:0px;white-space:nowrap;">36.27 ms</div>
<div style="position:absolute;left:1439.2px;top:769.2px;width:49.7px;height:18.7px;background:#7e649d;border-radius:4px;"></div>
<div style="position:absolute;left:964.05px;width:1000px;text-align:center;top:758px;font-size:10.9px;line-height:40px;color:#fff;font-weight:bold;letter-spacing:0px;white-space:nowrap;">GET</div>
<div style="position:absolute;left:1505.2px;top:769.2px;width:61.5px;height:18.7px;background:#c0c0c0;border-radius:4px;"></div>
<div style="position:absolute;left:1035.95px;width:1000px;text-align:center;top:758px;font-size:10.9px;line-height:40px;color:#fff;font-weight:bold;letter-spacing:0px;white-space:nowrap;">HTTP/2</div>
<div style="position:absolute;left:1582.4px;top:756px;font-size:10.6px;line-height:40px;color:#333;font-weight:normal;letter-spacing:0px;white-space:nowrap;">/obituaries/2401/patricia-wallenberg</div>
<div style="position:absolute;left:909px;top:795px;width:844px;height:0;border-top:1px dotted #000;"></div>
<div style="position:absolute;right:825.8px;top:791px;font-size:12px;line-height:40px;color:#333;font-weight:bold;letter-spacing:0.35px;white-space:nowrap;">TOT.</div>
<div style="position:absolute;right:739.2px;top:791px;font-size:12px;line-height:40px;color:#333;font-weight:bold;letter-spacing:0.35px;white-space:nowrap;">28,576</div>
<div style="position:absolute;right:652.0999999999999px;top:791px;font-size:12px;line-height:40px;color:#333;font-weight:bold;letter-spacing:0.35px;white-space:nowrap;">21,330</div>
<div style="position:absolute;right:545.2px;top:791px;font-size:12px;line-height:40px;color:#333;font-weight:bold;letter-spacing:0.35px;white-space:nowrap;">126.62 MiB</div>
<div style="position:absolute;right:479.0px;top:791px;font-size:10.6px;line-height:40px;color:#333;font-weight:normal;letter-spacing:0px;white-space:nowrap;">&mdash;</div>
<div style="position:absolute;right:412.0px;top:791px;font-size:12px;line-height:40px;color:#333;font-weight:bold;letter-spacing:0.35px;white-space:nowrap;">7.60 m</div>
<div style="position:absolute;right:345.0999999999999px;top:791px;font-size:12px;line-height:40px;color:#333;font-weight:bold;letter-spacing:0.35px;white-space:nowrap;">7.60 m</div>
<div style="position:absolute;left:1439.2px;top:791px;font-size:10.6px;line-height:40px;color:#333;font-weight:normal;letter-spacing:0px;white-space:nowrap;">&mdash;</div>
<div style="position:absolute;left:1504.3px;top:791px;font-size:10.6px;line-height:40px;color:#333;font-weight:normal;letter-spacing:0px;white-space:nowrap;">&mdash;</div>
<div style="position:absolute;left:1582.4px;top:791px;font-size:12px;line-height:40px;color:#333;font-weight:bold;letter-spacing:0.35px;white-space:nowrap;">7,688</div>
<div style="position:absolute;left:909px;top:846px;width:844px;height:15px;background:#f1f1f1;"></div>
<div style="position:absolute;left:924px;top:848px;width:812px;height:10.5px;background:#c1c1c1;"></div>
<svg style="position:absolute;left:913px;top:849px" width="6" height="9" viewBox="0 0 6 9"><path fill="#a3a3a3" d="M5,0.5 V8.5 L0.5,4.5 Z"/></svg>
<svg style="position:absolute;left:1742px;top:849px" width="6" height="9" viewBox="0 0 6 9"><path fill="#505050" d="M1,0.5 V8.5 L5.5,4.5 Z"/></svg>
<div style="position:absolute;left:20.4px;top:825.3px;width:96.5px;height:27px;box-sizing:border-box;border:1px solid #ddd;border-radius:4px;background:#fff;"></div>
<div style="position:absolute;left:45.4px;top:825.3px;width:1px;height:27px;background:#ddd;"></div>
<div style="position:absolute;left:69.3px;top:825.3px;width:1px;height:27px;background:#ddd;"></div>
<div style="position:absolute;left:91.5px;top:825.3px;width:1px;height:27px;background:#ddd;"></div>
<div style="position:absolute;left:-467.1px;width:1000px;text-align:center;top:818px;font-size:14.5px;line-height:40px;color:#7d8aa6;font-weight:normal;letter-spacing:0px;white-space:nowrap;">&laquo;</div>
<div style="position:absolute;left:-442.65px;width:1000px;text-align:center;top:818px;font-size:14.5px;line-height:40px;color:#8a8a8a;font-weight:normal;letter-spacing:0px;white-space:nowrap;">&lsaquo;</div>
<div style="position:absolute;left:-419.6px;width:1000px;text-align:center;top:818px;font-size:14.5px;line-height:40px;color:#4a7ab8;font-weight:normal;letter-spacing:0px;white-space:nowrap;">&rsaquo;</div>
<div style="position:absolute;left:-395.8px;width:1000px;text-align:center;top:818px;font-size:14.5px;line-height:40px;color:#4a7ab8;font-weight:normal;letter-spacing:0px;white-space:nowrap;">&raquo;</div>
<div style="position:absolute;left:909.5px;top:866px;width:96.5px;height:26.5px;box-sizing:border-box;border:1px solid #ddd;border-radius:4px;background:#fff;"></div>
<div style="position:absolute;left:934.3px;top:866px;width:1px;height:26.5px;background:#ddd;"></div>
<div style="position:absolute;left:957.4px;top:866px;width:1px;height:26.5px;background:#ddd;"></div>
<div style="position:absolute;left:980.3px;top:866px;width:1px;height:26.5px;background:#ddd;"></div>
<div style="position:absolute;left:421.9px;width:1000px;text-align:center;top:858px;font-size:14.5px;line-height:40px;color:#7d8aa6;font-weight:normal;letter-spacing:0px;white-space:nowrap;">&laquo;</div>
<div style="position:absolute;left:445.85px;width:1000px;text-align:center;top:858px;font-size:14.5px;line-height:40px;color:#8a8a8a;font-weight:normal;letter-spacing:0px;white-space:nowrap;">&lsaquo;</div>
<div style="position:absolute;left:468.85px;width:1000px;text-align:center;top:858px;font-size:14.5px;line-height:40px;color:#4a7ab8;font-weight:normal;letter-spacing:0px;white-space:nowrap;">&rsaquo;</div>
<div style="position:absolute;left:493.15px;width:1000px;text-align:center;top:858px;font-size:14.5px;line-height:40px;color:#4a7ab8;font-weight:normal;letter-spacing:0px;white-space:nowrap;">&raquo;</div>
</body></html>
